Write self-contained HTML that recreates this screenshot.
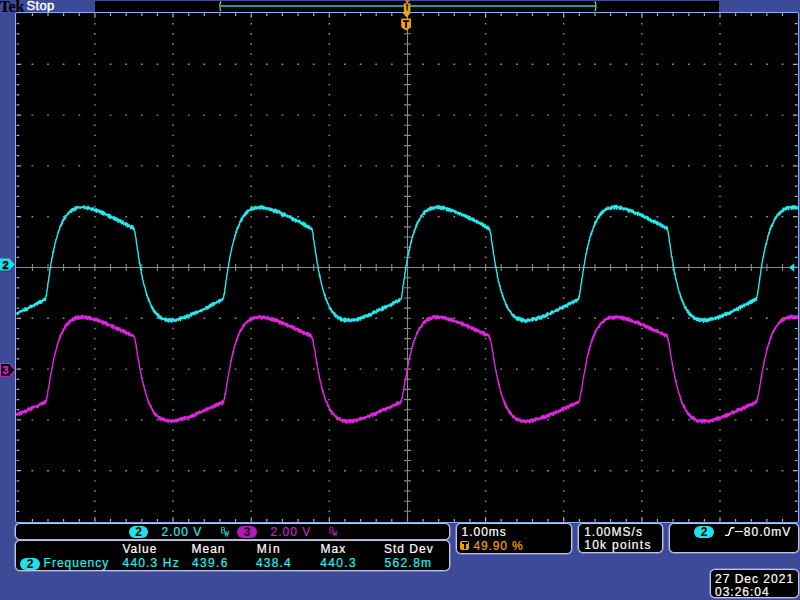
<!DOCTYPE html>
<html><head><meta charset="utf-8"><style>
*{margin:0;padding:0;box-sizing:border-box}
html,body{width:800px;height:600px;overflow:hidden;background:#3c4a98;font-family:"Liberation Sans",sans-serif}
.a{position:absolute}
#plot{left:15px;top:12px;width:784px;height:511px;background:#000;border:1.5px solid #8fb0f0;border-radius:2px}
.pnl{position:absolute;background:#000;border:1.6px solid #c4c4e0;border-radius:5px;box-shadow:0 0 0 0.6px #8e9ce8}
.t{position:absolute;font-size:12px;line-height:12px;letter-spacing:1px;white-space:pre;color:#fff;-webkit-text-stroke:0.2px currentColor}
.cy{color:#26eef2} .mg{color:#c626c8} .or{color:#f5a000}
.pill{position:absolute;height:12px;border-radius:6px;font-size:12px;line-height:12px;font-weight:bold;text-align:center;color:#000}
</style></head><body>
<div class="t" style="left:-0.5px;top:-1.3px;font-family:'Liberation Serif',serif;font-size:16px;line-height:16px;color:#000;font-weight:bold;letter-spacing:-0.1px">Tek</div>
<div class="t" style="left:26.6px;top:-0.6px;font-size:13px;line-height:13px;letter-spacing:0.3px;-webkit-text-stroke:0.4px #fff">Stop</div>
<div class="a" style="left:95px;top:1px;width:624px;height:11px;background:#000"></div>
<div class="a" style="left:221px;top:5px;width:374px;height:2px;background:#12a09c"></div>
<div class="a" id="plot"></div>
<div class="pnl" style="left:15px;top:523px;width:435px;height:17px"></div>
<div class="pnl" style="left:15px;top:540px;width:435px;height:31px"></div>
<div class="pnl" style="left:456px;top:523px;width:116px;height:30.5px"></div>
<div class="pnl" style="left:578px;top:523px;width:85px;height:30px"></div>
<div class="pnl" style="left:669px;top:523px;width:130px;height:30px"></div>
<div class="pnl" style="left:710px;top:569px;width:89px;height:29px"></div>
<svg class="a" style="left:0;top:0" width="800" height="600" viewBox="0 0 800 600">
<path d="M94.1 23.0h1.6v1.4h-1.6zM94.1 33.1h1.6v1.4h-1.6zM94.1 43.3h1.6v1.4h-1.6zM94.1 53.4h1.6v1.4h-1.6zM94.1 63.6h1.6v1.4h-1.6zM94.1 73.8h1.6v1.4h-1.6zM94.1 83.9h1.6v1.4h-1.6zM94.1 94.1h1.6v1.4h-1.6zM94.1 104.2h1.6v1.4h-1.6zM94.1 114.4h1.6v1.4h-1.6zM94.1 124.6h1.6v1.4h-1.6zM94.1 134.7h1.6v1.4h-1.6zM94.1 144.9h1.6v1.4h-1.6zM94.1 155.0h1.6v1.4h-1.6zM94.1 165.2h1.6v1.4h-1.6zM94.1 175.4h1.6v1.4h-1.6zM94.1 185.5h1.6v1.4h-1.6zM94.1 195.7h1.6v1.4h-1.6zM94.1 205.8h1.6v1.4h-1.6zM94.1 216.0h1.6v1.4h-1.6zM94.1 226.2h1.6v1.4h-1.6zM94.1 236.3h1.6v1.4h-1.6zM94.1 246.5h1.6v1.4h-1.6zM94.1 256.6h1.6v1.4h-1.6zM94.1 266.8h1.6v1.4h-1.6zM94.1 277.0h1.6v1.4h-1.6zM94.1 287.1h1.6v1.4h-1.6zM94.1 297.3h1.6v1.4h-1.6zM94.1 307.4h1.6v1.4h-1.6zM94.1 317.6h1.6v1.4h-1.6zM94.1 327.8h1.6v1.4h-1.6zM94.1 337.9h1.6v1.4h-1.6zM94.1 348.1h1.6v1.4h-1.6zM94.1 358.2h1.6v1.4h-1.6zM94.1 368.4h1.6v1.4h-1.6zM94.1 378.6h1.6v1.4h-1.6zM94.1 388.7h1.6v1.4h-1.6zM94.1 398.9h1.6v1.4h-1.6zM94.1 409.0h1.6v1.4h-1.6zM94.1 419.2h1.6v1.4h-1.6zM94.1 429.4h1.6v1.4h-1.6zM94.1 439.5h1.6v1.4h-1.6zM94.1 449.7h1.6v1.4h-1.6zM94.1 459.8h1.6v1.4h-1.6zM94.1 470.0h1.6v1.4h-1.6zM94.1 480.2h1.6v1.4h-1.6zM94.1 490.3h1.6v1.4h-1.6zM94.1 500.5h1.6v1.4h-1.6zM94.1 510.6h1.6v1.4h-1.6zM172.2 23.0h1.6v1.4h-1.6zM172.2 33.1h1.6v1.4h-1.6zM172.2 43.3h1.6v1.4h-1.6zM172.2 53.4h1.6v1.4h-1.6zM172.2 63.6h1.6v1.4h-1.6zM172.2 73.8h1.6v1.4h-1.6zM172.2 83.9h1.6v1.4h-1.6zM172.2 94.1h1.6v1.4h-1.6zM172.2 104.2h1.6v1.4h-1.6zM172.2 114.4h1.6v1.4h-1.6zM172.2 124.6h1.6v1.4h-1.6zM172.2 134.7h1.6v1.4h-1.6zM172.2 144.9h1.6v1.4h-1.6zM172.2 155.0h1.6v1.4h-1.6zM172.2 165.2h1.6v1.4h-1.6zM172.2 175.4h1.6v1.4h-1.6zM172.2 185.5h1.6v1.4h-1.6zM172.2 195.7h1.6v1.4h-1.6zM172.2 205.8h1.6v1.4h-1.6zM172.2 216.0h1.6v1.4h-1.6zM172.2 226.2h1.6v1.4h-1.6zM172.2 236.3h1.6v1.4h-1.6zM172.2 246.5h1.6v1.4h-1.6zM172.2 256.6h1.6v1.4h-1.6zM172.2 266.8h1.6v1.4h-1.6zM172.2 277.0h1.6v1.4h-1.6zM172.2 287.1h1.6v1.4h-1.6zM172.2 297.3h1.6v1.4h-1.6zM172.2 307.4h1.6v1.4h-1.6zM172.2 317.6h1.6v1.4h-1.6zM172.2 327.8h1.6v1.4h-1.6zM172.2 337.9h1.6v1.4h-1.6zM172.2 348.1h1.6v1.4h-1.6zM172.2 358.2h1.6v1.4h-1.6zM172.2 368.4h1.6v1.4h-1.6zM172.2 378.6h1.6v1.4h-1.6zM172.2 388.7h1.6v1.4h-1.6zM172.2 398.9h1.6v1.4h-1.6zM172.2 409.0h1.6v1.4h-1.6zM172.2 419.2h1.6v1.4h-1.6zM172.2 429.4h1.6v1.4h-1.6zM172.2 439.5h1.6v1.4h-1.6zM172.2 449.7h1.6v1.4h-1.6zM172.2 459.8h1.6v1.4h-1.6zM172.2 470.0h1.6v1.4h-1.6zM172.2 480.2h1.6v1.4h-1.6zM172.2 490.3h1.6v1.4h-1.6zM172.2 500.5h1.6v1.4h-1.6zM172.2 510.6h1.6v1.4h-1.6zM250.4 23.0h1.6v1.4h-1.6zM250.4 33.1h1.6v1.4h-1.6zM250.4 43.3h1.6v1.4h-1.6zM250.4 53.4h1.6v1.4h-1.6zM250.4 63.6h1.6v1.4h-1.6zM250.4 73.8h1.6v1.4h-1.6zM250.4 83.9h1.6v1.4h-1.6zM250.4 94.1h1.6v1.4h-1.6zM250.4 104.2h1.6v1.4h-1.6zM250.4 114.4h1.6v1.4h-1.6zM250.4 124.6h1.6v1.4h-1.6zM250.4 134.7h1.6v1.4h-1.6zM250.4 144.9h1.6v1.4h-1.6zM250.4 155.0h1.6v1.4h-1.6zM250.4 165.2h1.6v1.4h-1.6zM250.4 175.4h1.6v1.4h-1.6zM250.4 185.5h1.6v1.4h-1.6zM250.4 195.7h1.6v1.4h-1.6zM250.4 205.8h1.6v1.4h-1.6zM250.4 216.0h1.6v1.4h-1.6zM250.4 226.2h1.6v1.4h-1.6zM250.4 236.3h1.6v1.4h-1.6zM250.4 246.5h1.6v1.4h-1.6zM250.4 256.6h1.6v1.4h-1.6zM250.4 266.8h1.6v1.4h-1.6zM250.4 277.0h1.6v1.4h-1.6zM250.4 287.1h1.6v1.4h-1.6zM250.4 297.3h1.6v1.4h-1.6zM250.4 307.4h1.6v1.4h-1.6zM250.4 317.6h1.6v1.4h-1.6zM250.4 327.8h1.6v1.4h-1.6zM250.4 337.9h1.6v1.4h-1.6zM250.4 348.1h1.6v1.4h-1.6zM250.4 358.2h1.6v1.4h-1.6zM250.4 368.4h1.6v1.4h-1.6zM250.4 378.6h1.6v1.4h-1.6zM250.4 388.7h1.6v1.4h-1.6zM250.4 398.9h1.6v1.4h-1.6zM250.4 409.0h1.6v1.4h-1.6zM250.4 419.2h1.6v1.4h-1.6zM250.4 429.4h1.6v1.4h-1.6zM250.4 439.5h1.6v1.4h-1.6zM250.4 449.7h1.6v1.4h-1.6zM250.4 459.8h1.6v1.4h-1.6zM250.4 470.0h1.6v1.4h-1.6zM250.4 480.2h1.6v1.4h-1.6zM250.4 490.3h1.6v1.4h-1.6zM250.4 500.5h1.6v1.4h-1.6zM250.4 510.6h1.6v1.4h-1.6zM328.5 23.0h1.6v1.4h-1.6zM328.5 33.1h1.6v1.4h-1.6zM328.5 43.3h1.6v1.4h-1.6zM328.5 53.4h1.6v1.4h-1.6zM328.5 63.6h1.6v1.4h-1.6zM328.5 73.8h1.6v1.4h-1.6zM328.5 83.9h1.6v1.4h-1.6zM328.5 94.1h1.6v1.4h-1.6zM328.5 104.2h1.6v1.4h-1.6zM328.5 114.4h1.6v1.4h-1.6zM328.5 124.6h1.6v1.4h-1.6zM328.5 134.7h1.6v1.4h-1.6zM328.5 144.9h1.6v1.4h-1.6zM328.5 155.0h1.6v1.4h-1.6zM328.5 165.2h1.6v1.4h-1.6zM328.5 175.4h1.6v1.4h-1.6zM328.5 185.5h1.6v1.4h-1.6zM328.5 195.7h1.6v1.4h-1.6zM328.5 205.8h1.6v1.4h-1.6zM328.5 216.0h1.6v1.4h-1.6zM328.5 226.2h1.6v1.4h-1.6zM328.5 236.3h1.6v1.4h-1.6zM328.5 246.5h1.6v1.4h-1.6zM328.5 256.6h1.6v1.4h-1.6zM328.5 266.8h1.6v1.4h-1.6zM328.5 277.0h1.6v1.4h-1.6zM328.5 287.1h1.6v1.4h-1.6zM328.5 297.3h1.6v1.4h-1.6zM328.5 307.4h1.6v1.4h-1.6zM328.5 317.6h1.6v1.4h-1.6zM328.5 327.8h1.6v1.4h-1.6zM328.5 337.9h1.6v1.4h-1.6zM328.5 348.1h1.6v1.4h-1.6zM328.5 358.2h1.6v1.4h-1.6zM328.5 368.4h1.6v1.4h-1.6zM328.5 378.6h1.6v1.4h-1.6zM328.5 388.7h1.6v1.4h-1.6zM328.5 398.9h1.6v1.4h-1.6zM328.5 409.0h1.6v1.4h-1.6zM328.5 419.2h1.6v1.4h-1.6zM328.5 429.4h1.6v1.4h-1.6zM328.5 439.5h1.6v1.4h-1.6zM328.5 449.7h1.6v1.4h-1.6zM328.5 459.8h1.6v1.4h-1.6zM328.5 470.0h1.6v1.4h-1.6zM328.5 480.2h1.6v1.4h-1.6zM328.5 490.3h1.6v1.4h-1.6zM328.5 500.5h1.6v1.4h-1.6zM328.5 510.6h1.6v1.4h-1.6zM484.8 23.0h1.6v1.4h-1.6zM484.8 33.1h1.6v1.4h-1.6zM484.8 43.3h1.6v1.4h-1.6zM484.8 53.4h1.6v1.4h-1.6zM484.8 63.6h1.6v1.4h-1.6zM484.8 73.8h1.6v1.4h-1.6zM484.8 83.9h1.6v1.4h-1.6zM484.8 94.1h1.6v1.4h-1.6zM484.8 104.2h1.6v1.4h-1.6zM484.8 114.4h1.6v1.4h-1.6zM484.8 124.6h1.6v1.4h-1.6zM484.8 134.7h1.6v1.4h-1.6zM484.8 144.9h1.6v1.4h-1.6zM484.8 155.0h1.6v1.4h-1.6zM484.8 165.2h1.6v1.4h-1.6zM484.8 175.4h1.6v1.4h-1.6zM484.8 185.5h1.6v1.4h-1.6zM484.8 195.7h1.6v1.4h-1.6zM484.8 205.8h1.6v1.4h-1.6zM484.8 216.0h1.6v1.4h-1.6zM484.8 226.2h1.6v1.4h-1.6zM484.8 236.3h1.6v1.4h-1.6zM484.8 246.5h1.6v1.4h-1.6zM484.8 256.6h1.6v1.4h-1.6zM484.8 266.8h1.6v1.4h-1.6zM484.8 277.0h1.6v1.4h-1.6zM484.8 287.1h1.6v1.4h-1.6zM484.8 297.3h1.6v1.4h-1.6zM484.8 307.4h1.6v1.4h-1.6zM484.8 317.6h1.6v1.4h-1.6zM484.8 327.8h1.6v1.4h-1.6zM484.8 337.9h1.6v1.4h-1.6zM484.8 348.1h1.6v1.4h-1.6zM484.8 358.2h1.6v1.4h-1.6zM484.8 368.4h1.6v1.4h-1.6zM484.8 378.6h1.6v1.4h-1.6zM484.8 388.7h1.6v1.4h-1.6zM484.8 398.9h1.6v1.4h-1.6zM484.8 409.0h1.6v1.4h-1.6zM484.8 419.2h1.6v1.4h-1.6zM484.8 429.4h1.6v1.4h-1.6zM484.8 439.5h1.6v1.4h-1.6zM484.8 449.7h1.6v1.4h-1.6zM484.8 459.8h1.6v1.4h-1.6zM484.8 470.0h1.6v1.4h-1.6zM484.8 480.2h1.6v1.4h-1.6zM484.8 490.3h1.6v1.4h-1.6zM484.8 500.5h1.6v1.4h-1.6zM484.8 510.6h1.6v1.4h-1.6zM562.9 23.0h1.6v1.4h-1.6zM562.9 33.1h1.6v1.4h-1.6zM562.9 43.3h1.6v1.4h-1.6zM562.9 53.4h1.6v1.4h-1.6zM562.9 63.6h1.6v1.4h-1.6zM562.9 73.8h1.6v1.4h-1.6zM562.9 83.9h1.6v1.4h-1.6zM562.9 94.1h1.6v1.4h-1.6zM562.9 104.2h1.6v1.4h-1.6zM562.9 114.4h1.6v1.4h-1.6zM562.9 124.6h1.6v1.4h-1.6zM562.9 134.7h1.6v1.4h-1.6zM562.9 144.9h1.6v1.4h-1.6zM562.9 155.0h1.6v1.4h-1.6zM562.9 165.2h1.6v1.4h-1.6zM562.9 175.4h1.6v1.4h-1.6zM562.9 185.5h1.6v1.4h-1.6zM562.9 195.7h1.6v1.4h-1.6zM562.9 205.8h1.6v1.4h-1.6zM562.9 216.0h1.6v1.4h-1.6zM562.9 226.2h1.6v1.4h-1.6zM562.9 236.3h1.6v1.4h-1.6zM562.9 246.5h1.6v1.4h-1.6zM562.9 256.6h1.6v1.4h-1.6zM562.9 266.8h1.6v1.4h-1.6zM562.9 277.0h1.6v1.4h-1.6zM562.9 287.1h1.6v1.4h-1.6zM562.9 297.3h1.6v1.4h-1.6zM562.9 307.4h1.6v1.4h-1.6zM562.9 317.6h1.6v1.4h-1.6zM562.9 327.8h1.6v1.4h-1.6zM562.9 337.9h1.6v1.4h-1.6zM562.9 348.1h1.6v1.4h-1.6zM562.9 358.2h1.6v1.4h-1.6zM562.9 368.4h1.6v1.4h-1.6zM562.9 378.6h1.6v1.4h-1.6zM562.9 388.7h1.6v1.4h-1.6zM562.9 398.9h1.6v1.4h-1.6zM562.9 409.0h1.6v1.4h-1.6zM562.9 419.2h1.6v1.4h-1.6zM562.9 429.4h1.6v1.4h-1.6zM562.9 439.5h1.6v1.4h-1.6zM562.9 449.7h1.6v1.4h-1.6zM562.9 459.8h1.6v1.4h-1.6zM562.9 470.0h1.6v1.4h-1.6zM562.9 480.2h1.6v1.4h-1.6zM562.9 490.3h1.6v1.4h-1.6zM562.9 500.5h1.6v1.4h-1.6zM562.9 510.6h1.6v1.4h-1.6zM641.1 23.0h1.6v1.4h-1.6zM641.1 33.1h1.6v1.4h-1.6zM641.1 43.3h1.6v1.4h-1.6zM641.1 53.4h1.6v1.4h-1.6zM641.1 63.6h1.6v1.4h-1.6zM641.1 73.8h1.6v1.4h-1.6zM641.1 83.9h1.6v1.4h-1.6zM641.1 94.1h1.6v1.4h-1.6zM641.1 104.2h1.6v1.4h-1.6zM641.1 114.4h1.6v1.4h-1.6zM641.1 124.6h1.6v1.4h-1.6zM641.1 134.7h1.6v1.4h-1.6zM641.1 144.9h1.6v1.4h-1.6zM641.1 155.0h1.6v1.4h-1.6zM641.1 165.2h1.6v1.4h-1.6zM641.1 175.4h1.6v1.4h-1.6zM641.1 185.5h1.6v1.4h-1.6zM641.1 195.7h1.6v1.4h-1.6zM641.1 205.8h1.6v1.4h-1.6zM641.1 216.0h1.6v1.4h-1.6zM641.1 226.2h1.6v1.4h-1.6zM641.1 236.3h1.6v1.4h-1.6zM641.1 246.5h1.6v1.4h-1.6zM641.1 256.6h1.6v1.4h-1.6zM641.1 266.8h1.6v1.4h-1.6zM641.1 277.0h1.6v1.4h-1.6zM641.1 287.1h1.6v1.4h-1.6zM641.1 297.3h1.6v1.4h-1.6zM641.1 307.4h1.6v1.4h-1.6zM641.1 317.6h1.6v1.4h-1.6zM641.1 327.8h1.6v1.4h-1.6zM641.1 337.9h1.6v1.4h-1.6zM641.1 348.1h1.6v1.4h-1.6zM641.1 358.2h1.6v1.4h-1.6zM641.1 368.4h1.6v1.4h-1.6zM641.1 378.6h1.6v1.4h-1.6zM641.1 388.7h1.6v1.4h-1.6zM641.1 398.9h1.6v1.4h-1.6zM641.1 409.0h1.6v1.4h-1.6zM641.1 419.2h1.6v1.4h-1.6zM641.1 429.4h1.6v1.4h-1.6zM641.1 439.5h1.6v1.4h-1.6zM641.1 449.7h1.6v1.4h-1.6zM641.1 459.8h1.6v1.4h-1.6zM641.1 470.0h1.6v1.4h-1.6zM641.1 480.2h1.6v1.4h-1.6zM641.1 490.3h1.6v1.4h-1.6zM641.1 500.5h1.6v1.4h-1.6zM641.1 510.6h1.6v1.4h-1.6zM719.2 23.0h1.6v1.4h-1.6zM719.2 33.1h1.6v1.4h-1.6zM719.2 43.3h1.6v1.4h-1.6zM719.2 53.4h1.6v1.4h-1.6zM719.2 63.6h1.6v1.4h-1.6zM719.2 73.8h1.6v1.4h-1.6zM719.2 83.9h1.6v1.4h-1.6zM719.2 94.1h1.6v1.4h-1.6zM719.2 104.2h1.6v1.4h-1.6zM719.2 114.4h1.6v1.4h-1.6zM719.2 124.6h1.6v1.4h-1.6zM719.2 134.7h1.6v1.4h-1.6zM719.2 144.9h1.6v1.4h-1.6zM719.2 155.0h1.6v1.4h-1.6zM719.2 165.2h1.6v1.4h-1.6zM719.2 175.4h1.6v1.4h-1.6zM719.2 185.5h1.6v1.4h-1.6zM719.2 195.7h1.6v1.4h-1.6zM719.2 205.8h1.6v1.4h-1.6zM719.2 216.0h1.6v1.4h-1.6zM719.2 226.2h1.6v1.4h-1.6zM719.2 236.3h1.6v1.4h-1.6zM719.2 246.5h1.6v1.4h-1.6zM719.2 256.6h1.6v1.4h-1.6zM719.2 266.8h1.6v1.4h-1.6zM719.2 277.0h1.6v1.4h-1.6zM719.2 287.1h1.6v1.4h-1.6zM719.2 297.3h1.6v1.4h-1.6zM719.2 307.4h1.6v1.4h-1.6zM719.2 317.6h1.6v1.4h-1.6zM719.2 327.8h1.6v1.4h-1.6zM719.2 337.9h1.6v1.4h-1.6zM719.2 348.1h1.6v1.4h-1.6zM719.2 358.2h1.6v1.4h-1.6zM719.2 368.4h1.6v1.4h-1.6zM719.2 378.6h1.6v1.4h-1.6zM719.2 388.7h1.6v1.4h-1.6zM719.2 398.9h1.6v1.4h-1.6zM719.2 409.0h1.6v1.4h-1.6zM719.2 419.2h1.6v1.4h-1.6zM719.2 429.4h1.6v1.4h-1.6zM719.2 439.5h1.6v1.4h-1.6zM719.2 449.7h1.6v1.4h-1.6zM719.2 459.8h1.6v1.4h-1.6zM719.2 470.0h1.6v1.4h-1.6zM719.2 480.2h1.6v1.4h-1.6zM719.2 490.3h1.6v1.4h-1.6zM719.2 500.5h1.6v1.4h-1.6zM719.2 510.6h1.6v1.4h-1.6zM31.5 63.6h1.8v1.4h-1.8zM47.1 63.6h1.8v1.4h-1.8zM62.7 63.6h1.8v1.4h-1.8zM78.4 63.6h1.8v1.4h-1.8zM109.6 63.6h1.8v1.4h-1.8zM125.3 63.6h1.8v1.4h-1.8zM140.9 63.6h1.8v1.4h-1.8zM156.5 63.6h1.8v1.4h-1.8zM187.8 63.6h1.8v1.4h-1.8zM203.4 63.6h1.8v1.4h-1.8zM219.0 63.6h1.8v1.4h-1.8zM234.7 63.6h1.8v1.4h-1.8zM265.9 63.6h1.8v1.4h-1.8zM281.5 63.6h1.8v1.4h-1.8zM297.2 63.6h1.8v1.4h-1.8zM312.8 63.6h1.8v1.4h-1.8zM344.0 63.6h1.8v1.4h-1.8zM359.7 63.6h1.8v1.4h-1.8zM375.3 63.6h1.8v1.4h-1.8zM390.9 63.6h1.8v1.4h-1.8zM422.2 63.6h1.8v1.4h-1.8zM437.8 63.6h1.8v1.4h-1.8zM453.4 63.6h1.8v1.4h-1.8zM469.1 63.6h1.8v1.4h-1.8zM500.3 63.6h1.8v1.4h-1.8zM516.0 63.6h1.8v1.4h-1.8zM531.6 63.6h1.8v1.4h-1.8zM547.2 63.6h1.8v1.4h-1.8zM578.5 63.6h1.8v1.4h-1.8zM594.1 63.6h1.8v1.4h-1.8zM609.7 63.6h1.8v1.4h-1.8zM625.4 63.6h1.8v1.4h-1.8zM656.6 63.6h1.8v1.4h-1.8zM672.2 63.6h1.8v1.4h-1.8zM687.9 63.6h1.8v1.4h-1.8zM703.5 63.6h1.8v1.4h-1.8zM734.7 63.6h1.8v1.4h-1.8zM750.4 63.6h1.8v1.4h-1.8zM766.0 63.6h1.8v1.4h-1.8zM781.6 63.6h1.8v1.4h-1.8zM31.5 114.4h1.8v1.4h-1.8zM47.1 114.4h1.8v1.4h-1.8zM62.7 114.4h1.8v1.4h-1.8zM78.4 114.4h1.8v1.4h-1.8zM109.6 114.4h1.8v1.4h-1.8zM125.3 114.4h1.8v1.4h-1.8zM140.9 114.4h1.8v1.4h-1.8zM156.5 114.4h1.8v1.4h-1.8zM187.8 114.4h1.8v1.4h-1.8zM203.4 114.4h1.8v1.4h-1.8zM219.0 114.4h1.8v1.4h-1.8zM234.7 114.4h1.8v1.4h-1.8zM265.9 114.4h1.8v1.4h-1.8zM281.5 114.4h1.8v1.4h-1.8zM297.2 114.4h1.8v1.4h-1.8zM312.8 114.4h1.8v1.4h-1.8zM344.0 114.4h1.8v1.4h-1.8zM359.7 114.4h1.8v1.4h-1.8zM375.3 114.4h1.8v1.4h-1.8zM390.9 114.4h1.8v1.4h-1.8zM422.2 114.4h1.8v1.4h-1.8zM437.8 114.4h1.8v1.4h-1.8zM453.4 114.4h1.8v1.4h-1.8zM469.1 114.4h1.8v1.4h-1.8zM500.3 114.4h1.8v1.4h-1.8zM516.0 114.4h1.8v1.4h-1.8zM531.6 114.4h1.8v1.4h-1.8zM547.2 114.4h1.8v1.4h-1.8zM578.5 114.4h1.8v1.4h-1.8zM594.1 114.4h1.8v1.4h-1.8zM609.7 114.4h1.8v1.4h-1.8zM625.4 114.4h1.8v1.4h-1.8zM656.6 114.4h1.8v1.4h-1.8zM672.2 114.4h1.8v1.4h-1.8zM687.9 114.4h1.8v1.4h-1.8zM703.5 114.4h1.8v1.4h-1.8zM734.7 114.4h1.8v1.4h-1.8zM750.4 114.4h1.8v1.4h-1.8zM766.0 114.4h1.8v1.4h-1.8zM781.6 114.4h1.8v1.4h-1.8zM31.5 165.2h1.8v1.4h-1.8zM47.1 165.2h1.8v1.4h-1.8zM62.7 165.2h1.8v1.4h-1.8zM78.4 165.2h1.8v1.4h-1.8zM109.6 165.2h1.8v1.4h-1.8zM125.3 165.2h1.8v1.4h-1.8zM140.9 165.2h1.8v1.4h-1.8zM156.5 165.2h1.8v1.4h-1.8zM187.8 165.2h1.8v1.4h-1.8zM203.4 165.2h1.8v1.4h-1.8zM219.0 165.2h1.8v1.4h-1.8zM234.7 165.2h1.8v1.4h-1.8zM265.9 165.2h1.8v1.4h-1.8zM281.5 165.2h1.8v1.4h-1.8zM297.2 165.2h1.8v1.4h-1.8zM312.8 165.2h1.8v1.4h-1.8zM344.0 165.2h1.8v1.4h-1.8zM359.7 165.2h1.8v1.4h-1.8zM375.3 165.2h1.8v1.4h-1.8zM390.9 165.2h1.8v1.4h-1.8zM422.2 165.2h1.8v1.4h-1.8zM437.8 165.2h1.8v1.4h-1.8zM453.4 165.2h1.8v1.4h-1.8zM469.1 165.2h1.8v1.4h-1.8zM500.3 165.2h1.8v1.4h-1.8zM516.0 165.2h1.8v1.4h-1.8zM531.6 165.2h1.8v1.4h-1.8zM547.2 165.2h1.8v1.4h-1.8zM578.5 165.2h1.8v1.4h-1.8zM594.1 165.2h1.8v1.4h-1.8zM609.7 165.2h1.8v1.4h-1.8zM625.4 165.2h1.8v1.4h-1.8zM656.6 165.2h1.8v1.4h-1.8zM672.2 165.2h1.8v1.4h-1.8zM687.9 165.2h1.8v1.4h-1.8zM703.5 165.2h1.8v1.4h-1.8zM734.7 165.2h1.8v1.4h-1.8zM750.4 165.2h1.8v1.4h-1.8zM766.0 165.2h1.8v1.4h-1.8zM781.6 165.2h1.8v1.4h-1.8zM31.5 216.0h1.8v1.4h-1.8zM47.1 216.0h1.8v1.4h-1.8zM62.7 216.0h1.8v1.4h-1.8zM78.4 216.0h1.8v1.4h-1.8zM109.6 216.0h1.8v1.4h-1.8zM125.3 216.0h1.8v1.4h-1.8zM140.9 216.0h1.8v1.4h-1.8zM156.5 216.0h1.8v1.4h-1.8zM187.8 216.0h1.8v1.4h-1.8zM203.4 216.0h1.8v1.4h-1.8zM219.0 216.0h1.8v1.4h-1.8zM234.7 216.0h1.8v1.4h-1.8zM265.9 216.0h1.8v1.4h-1.8zM281.5 216.0h1.8v1.4h-1.8zM297.2 216.0h1.8v1.4h-1.8zM312.8 216.0h1.8v1.4h-1.8zM344.0 216.0h1.8v1.4h-1.8zM359.7 216.0h1.8v1.4h-1.8zM375.3 216.0h1.8v1.4h-1.8zM390.9 216.0h1.8v1.4h-1.8zM422.2 216.0h1.8v1.4h-1.8zM437.8 216.0h1.8v1.4h-1.8zM453.4 216.0h1.8v1.4h-1.8zM469.1 216.0h1.8v1.4h-1.8zM500.3 216.0h1.8v1.4h-1.8zM516.0 216.0h1.8v1.4h-1.8zM531.6 216.0h1.8v1.4h-1.8zM547.2 216.0h1.8v1.4h-1.8zM578.5 216.0h1.8v1.4h-1.8zM594.1 216.0h1.8v1.4h-1.8zM609.7 216.0h1.8v1.4h-1.8zM625.4 216.0h1.8v1.4h-1.8zM656.6 216.0h1.8v1.4h-1.8zM672.2 216.0h1.8v1.4h-1.8zM687.9 216.0h1.8v1.4h-1.8zM703.5 216.0h1.8v1.4h-1.8zM734.7 216.0h1.8v1.4h-1.8zM750.4 216.0h1.8v1.4h-1.8zM766.0 216.0h1.8v1.4h-1.8zM781.6 216.0h1.8v1.4h-1.8zM31.5 317.6h1.8v1.4h-1.8zM47.1 317.6h1.8v1.4h-1.8zM62.7 317.6h1.8v1.4h-1.8zM78.4 317.6h1.8v1.4h-1.8zM109.6 317.6h1.8v1.4h-1.8zM125.3 317.6h1.8v1.4h-1.8zM140.9 317.6h1.8v1.4h-1.8zM156.5 317.6h1.8v1.4h-1.8zM187.8 317.6h1.8v1.4h-1.8zM203.4 317.6h1.8v1.4h-1.8zM219.0 317.6h1.8v1.4h-1.8zM234.7 317.6h1.8v1.4h-1.8zM265.9 317.6h1.8v1.4h-1.8zM281.5 317.6h1.8v1.4h-1.8zM297.2 317.6h1.8v1.4h-1.8zM312.8 317.6h1.8v1.4h-1.8zM344.0 317.6h1.8v1.4h-1.8zM359.7 317.6h1.8v1.4h-1.8zM375.3 317.6h1.8v1.4h-1.8zM390.9 317.6h1.8v1.4h-1.8zM422.2 317.6h1.8v1.4h-1.8zM437.8 317.6h1.8v1.4h-1.8zM453.4 317.6h1.8v1.4h-1.8zM469.1 317.6h1.8v1.4h-1.8zM500.3 317.6h1.8v1.4h-1.8zM516.0 317.6h1.8v1.4h-1.8zM531.6 317.6h1.8v1.4h-1.8zM547.2 317.6h1.8v1.4h-1.8zM578.5 317.6h1.8v1.4h-1.8zM594.1 317.6h1.8v1.4h-1.8zM609.7 317.6h1.8v1.4h-1.8zM625.4 317.6h1.8v1.4h-1.8zM656.6 317.6h1.8v1.4h-1.8zM672.2 317.6h1.8v1.4h-1.8zM687.9 317.6h1.8v1.4h-1.8zM703.5 317.6h1.8v1.4h-1.8zM734.7 317.6h1.8v1.4h-1.8zM750.4 317.6h1.8v1.4h-1.8zM766.0 317.6h1.8v1.4h-1.8zM781.6 317.6h1.8v1.4h-1.8zM31.5 368.4h1.8v1.4h-1.8zM47.1 368.4h1.8v1.4h-1.8zM62.7 368.4h1.8v1.4h-1.8zM78.4 368.4h1.8v1.4h-1.8zM109.6 368.4h1.8v1.4h-1.8zM125.3 368.4h1.8v1.4h-1.8zM140.9 368.4h1.8v1.4h-1.8zM156.5 368.4h1.8v1.4h-1.8zM187.8 368.4h1.8v1.4h-1.8zM203.4 368.4h1.8v1.4h-1.8zM219.0 368.4h1.8v1.4h-1.8zM234.7 368.4h1.8v1.4h-1.8zM265.9 368.4h1.8v1.4h-1.8zM281.5 368.4h1.8v1.4h-1.8zM297.2 368.4h1.8v1.4h-1.8zM312.8 368.4h1.8v1.4h-1.8zM344.0 368.4h1.8v1.4h-1.8zM359.7 368.4h1.8v1.4h-1.8zM375.3 368.4h1.8v1.4h-1.8zM390.9 368.4h1.8v1.4h-1.8zM422.2 368.4h1.8v1.4h-1.8zM437.8 368.4h1.8v1.4h-1.8zM453.4 368.4h1.8v1.4h-1.8zM469.1 368.4h1.8v1.4h-1.8zM500.3 368.4h1.8v1.4h-1.8zM516.0 368.4h1.8v1.4h-1.8zM531.6 368.4h1.8v1.4h-1.8zM547.2 368.4h1.8v1.4h-1.8zM578.5 368.4h1.8v1.4h-1.8zM594.1 368.4h1.8v1.4h-1.8zM609.7 368.4h1.8v1.4h-1.8zM625.4 368.4h1.8v1.4h-1.8zM656.6 368.4h1.8v1.4h-1.8zM672.2 368.4h1.8v1.4h-1.8zM687.9 368.4h1.8v1.4h-1.8zM703.5 368.4h1.8v1.4h-1.8zM734.7 368.4h1.8v1.4h-1.8zM750.4 368.4h1.8v1.4h-1.8zM766.0 368.4h1.8v1.4h-1.8zM781.6 368.4h1.8v1.4h-1.8zM31.5 419.2h1.8v1.4h-1.8zM47.1 419.2h1.8v1.4h-1.8zM62.7 419.2h1.8v1.4h-1.8zM78.4 419.2h1.8v1.4h-1.8zM109.6 419.2h1.8v1.4h-1.8zM125.3 419.2h1.8v1.4h-1.8zM140.9 419.2h1.8v1.4h-1.8zM156.5 419.2h1.8v1.4h-1.8zM187.8 419.2h1.8v1.4h-1.8zM203.4 419.2h1.8v1.4h-1.8zM219.0 419.2h1.8v1.4h-1.8zM234.7 419.2h1.8v1.4h-1.8zM265.9 419.2h1.8v1.4h-1.8zM281.5 419.2h1.8v1.4h-1.8zM297.2 419.2h1.8v1.4h-1.8zM312.8 419.2h1.8v1.4h-1.8zM344.0 419.2h1.8v1.4h-1.8zM359.7 419.2h1.8v1.4h-1.8zM375.3 419.2h1.8v1.4h-1.8zM390.9 419.2h1.8v1.4h-1.8zM422.2 419.2h1.8v1.4h-1.8zM437.8 419.2h1.8v1.4h-1.8zM453.4 419.2h1.8v1.4h-1.8zM469.1 419.2h1.8v1.4h-1.8zM500.3 419.2h1.8v1.4h-1.8zM516.0 419.2h1.8v1.4h-1.8zM531.6 419.2h1.8v1.4h-1.8zM547.2 419.2h1.8v1.4h-1.8zM578.5 419.2h1.8v1.4h-1.8zM594.1 419.2h1.8v1.4h-1.8zM609.7 419.2h1.8v1.4h-1.8zM625.4 419.2h1.8v1.4h-1.8zM656.6 419.2h1.8v1.4h-1.8zM672.2 419.2h1.8v1.4h-1.8zM687.9 419.2h1.8v1.4h-1.8zM703.5 419.2h1.8v1.4h-1.8zM734.7 419.2h1.8v1.4h-1.8zM750.4 419.2h1.8v1.4h-1.8zM766.0 419.2h1.8v1.4h-1.8zM781.6 419.2h1.8v1.4h-1.8zM31.5 470.0h1.8v1.4h-1.8zM47.1 470.0h1.8v1.4h-1.8zM62.7 470.0h1.8v1.4h-1.8zM78.4 470.0h1.8v1.4h-1.8zM109.6 470.0h1.8v1.4h-1.8zM125.3 470.0h1.8v1.4h-1.8zM140.9 470.0h1.8v1.4h-1.8zM156.5 470.0h1.8v1.4h-1.8zM187.8 470.0h1.8v1.4h-1.8zM203.4 470.0h1.8v1.4h-1.8zM219.0 470.0h1.8v1.4h-1.8zM234.7 470.0h1.8v1.4h-1.8zM265.9 470.0h1.8v1.4h-1.8zM281.5 470.0h1.8v1.4h-1.8zM297.2 470.0h1.8v1.4h-1.8zM312.8 470.0h1.8v1.4h-1.8zM344.0 470.0h1.8v1.4h-1.8zM359.7 470.0h1.8v1.4h-1.8zM375.3 470.0h1.8v1.4h-1.8zM390.9 470.0h1.8v1.4h-1.8zM422.2 470.0h1.8v1.4h-1.8zM437.8 470.0h1.8v1.4h-1.8zM453.4 470.0h1.8v1.4h-1.8zM469.1 470.0h1.8v1.4h-1.8zM500.3 470.0h1.8v1.4h-1.8zM516.0 470.0h1.8v1.4h-1.8zM531.6 470.0h1.8v1.4h-1.8zM547.2 470.0h1.8v1.4h-1.8zM578.5 470.0h1.8v1.4h-1.8zM594.1 470.0h1.8v1.4h-1.8zM609.7 470.0h1.8v1.4h-1.8zM625.4 470.0h1.8v1.4h-1.8zM656.6 470.0h1.8v1.4h-1.8zM672.2 470.0h1.8v1.4h-1.8zM687.9 470.0h1.8v1.4h-1.8zM703.5 470.0h1.8v1.4h-1.8zM734.7 470.0h1.8v1.4h-1.8zM750.4 470.0h1.8v1.4h-1.8zM766.0 470.0h1.8v1.4h-1.8zM781.6 470.0h1.8v1.4h-1.8z" fill="#8e8e8e"/>
<path d="M31.8 13.3h1.2v2.7h-1.2zM31.8 519.0h1.2v2.7h-1.2zM47.4 13.3h1.2v2.7h-1.2zM47.4 519.0h1.2v2.7h-1.2zM63.0 13.3h1.2v2.7h-1.2zM63.0 519.0h1.2v2.7h-1.2zM78.7 13.3h1.2v2.7h-1.2zM78.7 519.0h1.2v2.7h-1.2zM94.3 13.3h1.2v4.5h-1.2zM94.3 517.2h1.2v4.5h-1.2zM109.9 13.3h1.2v2.7h-1.2zM109.9 519.0h1.2v2.7h-1.2zM125.6 13.3h1.2v2.7h-1.2zM125.6 519.0h1.2v2.7h-1.2zM141.2 13.3h1.2v2.7h-1.2zM141.2 519.0h1.2v2.7h-1.2zM156.8 13.3h1.2v2.7h-1.2zM156.8 519.0h1.2v2.7h-1.2zM172.4 13.3h1.2v4.5h-1.2zM172.4 517.2h1.2v4.5h-1.2zM188.1 13.3h1.2v2.7h-1.2zM188.1 519.0h1.2v2.7h-1.2zM203.7 13.3h1.2v2.7h-1.2zM203.7 519.0h1.2v2.7h-1.2zM219.3 13.3h1.2v2.7h-1.2zM219.3 519.0h1.2v2.7h-1.2zM235.0 13.3h1.2v2.7h-1.2zM235.0 519.0h1.2v2.7h-1.2zM250.6 13.3h1.2v4.5h-1.2zM250.6 517.2h1.2v4.5h-1.2zM266.2 13.3h1.2v2.7h-1.2zM266.2 519.0h1.2v2.7h-1.2zM281.8 13.3h1.2v2.7h-1.2zM281.8 519.0h1.2v2.7h-1.2zM297.5 13.3h1.2v2.7h-1.2zM297.5 519.0h1.2v2.7h-1.2zM313.1 13.3h1.2v2.7h-1.2zM313.1 519.0h1.2v2.7h-1.2zM328.7 13.3h1.2v4.5h-1.2zM328.7 517.2h1.2v4.5h-1.2zM344.3 13.3h1.2v2.7h-1.2zM344.3 519.0h1.2v2.7h-1.2zM360.0 13.3h1.2v2.7h-1.2zM360.0 519.0h1.2v2.7h-1.2zM375.6 13.3h1.2v2.7h-1.2zM375.6 519.0h1.2v2.7h-1.2zM391.2 13.3h1.2v2.7h-1.2zM391.2 519.0h1.2v2.7h-1.2zM406.9 13.3h1.2v4.5h-1.2zM406.9 517.2h1.2v4.5h-1.2zM422.5 13.3h1.2v2.7h-1.2zM422.5 519.0h1.2v2.7h-1.2zM438.1 13.3h1.2v2.7h-1.2zM438.1 519.0h1.2v2.7h-1.2zM453.7 13.3h1.2v2.7h-1.2zM453.7 519.0h1.2v2.7h-1.2zM469.4 13.3h1.2v2.7h-1.2zM469.4 519.0h1.2v2.7h-1.2zM485.0 13.3h1.2v4.5h-1.2zM485.0 517.2h1.2v4.5h-1.2zM500.6 13.3h1.2v2.7h-1.2zM500.6 519.0h1.2v2.7h-1.2zM516.3 13.3h1.2v2.7h-1.2zM516.3 519.0h1.2v2.7h-1.2zM531.9 13.3h1.2v2.7h-1.2zM531.9 519.0h1.2v2.7h-1.2zM547.5 13.3h1.2v2.7h-1.2zM547.5 519.0h1.2v2.7h-1.2zM563.1 13.3h1.2v4.5h-1.2zM563.1 517.2h1.2v4.5h-1.2zM578.8 13.3h1.2v2.7h-1.2zM578.8 519.0h1.2v2.7h-1.2zM594.4 13.3h1.2v2.7h-1.2zM594.4 519.0h1.2v2.7h-1.2zM610.0 13.3h1.2v2.7h-1.2zM610.0 519.0h1.2v2.7h-1.2zM625.7 13.3h1.2v2.7h-1.2zM625.7 519.0h1.2v2.7h-1.2zM641.3 13.3h1.2v4.5h-1.2zM641.3 517.2h1.2v4.5h-1.2zM656.9 13.3h1.2v2.7h-1.2zM656.9 519.0h1.2v2.7h-1.2zM672.5 13.3h1.2v2.7h-1.2zM672.5 519.0h1.2v2.7h-1.2zM688.2 13.3h1.2v2.7h-1.2zM688.2 519.0h1.2v2.7h-1.2zM703.8 13.3h1.2v2.7h-1.2zM703.8 519.0h1.2v2.7h-1.2zM719.4 13.3h1.2v4.5h-1.2zM719.4 517.2h1.2v4.5h-1.2zM735.0 13.3h1.2v2.7h-1.2zM735.0 519.0h1.2v2.7h-1.2zM750.7 13.3h1.2v2.7h-1.2zM750.7 519.0h1.2v2.7h-1.2zM766.3 13.3h1.2v2.7h-1.2zM766.3 519.0h1.2v2.7h-1.2zM781.9 13.3h1.2v2.7h-1.2zM781.9 519.0h1.2v2.7h-1.2zM16.6 23.1h2.6v1.2h-2.6zM794.9 23.1h2.6v1.2h-2.6zM16.6 33.2h2.6v1.2h-2.6zM794.9 33.2h2.6v1.2h-2.6zM16.6 43.4h2.6v1.2h-2.6zM794.9 43.4h2.6v1.2h-2.6zM16.6 53.5h2.6v1.2h-2.6zM794.9 53.5h2.6v1.2h-2.6zM16.6 63.7h4.5v1.2h-4.5zM793.0 63.7h4.5v1.2h-4.5zM16.6 73.9h2.6v1.2h-2.6zM794.9 73.9h2.6v1.2h-2.6zM16.6 84.0h2.6v1.2h-2.6zM794.9 84.0h2.6v1.2h-2.6zM16.6 94.2h2.6v1.2h-2.6zM794.9 94.2h2.6v1.2h-2.6zM16.6 104.3h2.6v1.2h-2.6zM794.9 104.3h2.6v1.2h-2.6zM16.6 114.5h4.5v1.2h-4.5zM793.0 114.5h4.5v1.2h-4.5zM16.6 124.7h2.6v1.2h-2.6zM794.9 124.7h2.6v1.2h-2.6zM16.6 134.8h2.6v1.2h-2.6zM794.9 134.8h2.6v1.2h-2.6zM16.6 145.0h2.6v1.2h-2.6zM794.9 145.0h2.6v1.2h-2.6zM16.6 155.1h2.6v1.2h-2.6zM794.9 155.1h2.6v1.2h-2.6zM16.6 165.3h4.5v1.2h-4.5zM793.0 165.3h4.5v1.2h-4.5zM16.6 175.5h2.6v1.2h-2.6zM794.9 175.5h2.6v1.2h-2.6zM16.6 185.6h2.6v1.2h-2.6zM794.9 185.6h2.6v1.2h-2.6zM16.6 195.8h2.6v1.2h-2.6zM794.9 195.8h2.6v1.2h-2.6zM16.6 205.9h2.6v1.2h-2.6zM794.9 205.9h2.6v1.2h-2.6zM16.6 216.1h4.5v1.2h-4.5zM793.0 216.1h4.5v1.2h-4.5zM16.6 226.3h2.6v1.2h-2.6zM794.9 226.3h2.6v1.2h-2.6zM16.6 236.4h2.6v1.2h-2.6zM794.9 236.4h2.6v1.2h-2.6zM16.6 246.6h2.6v1.2h-2.6zM794.9 246.6h2.6v1.2h-2.6zM16.6 256.7h2.6v1.2h-2.6zM794.9 256.7h2.6v1.2h-2.6zM16.6 266.9h4.5v1.2h-4.5zM793.0 266.9h4.5v1.2h-4.5zM16.6 277.1h2.6v1.2h-2.6zM794.9 277.1h2.6v1.2h-2.6zM16.6 287.2h2.6v1.2h-2.6zM794.9 287.2h2.6v1.2h-2.6zM16.6 297.4h2.6v1.2h-2.6zM794.9 297.4h2.6v1.2h-2.6zM16.6 307.5h2.6v1.2h-2.6zM794.9 307.5h2.6v1.2h-2.6zM16.6 317.7h4.5v1.2h-4.5zM793.0 317.7h4.5v1.2h-4.5zM16.6 327.9h2.6v1.2h-2.6zM794.9 327.9h2.6v1.2h-2.6zM16.6 338.0h2.6v1.2h-2.6zM794.9 338.0h2.6v1.2h-2.6zM16.6 348.2h2.6v1.2h-2.6zM794.9 348.2h2.6v1.2h-2.6zM16.6 358.3h2.6v1.2h-2.6zM794.9 358.3h2.6v1.2h-2.6zM16.6 368.5h4.5v1.2h-4.5zM793.0 368.5h4.5v1.2h-4.5zM16.6 378.7h2.6v1.2h-2.6zM794.9 378.7h2.6v1.2h-2.6zM16.6 388.8h2.6v1.2h-2.6zM794.9 388.8h2.6v1.2h-2.6zM16.6 399.0h2.6v1.2h-2.6zM794.9 399.0h2.6v1.2h-2.6zM16.6 409.1h2.6v1.2h-2.6zM794.9 409.1h2.6v1.2h-2.6zM16.6 419.3h4.5v1.2h-4.5zM793.0 419.3h4.5v1.2h-4.5zM16.6 429.5h2.6v1.2h-2.6zM794.9 429.5h2.6v1.2h-2.6zM16.6 439.6h2.6v1.2h-2.6zM794.9 439.6h2.6v1.2h-2.6zM16.6 449.8h2.6v1.2h-2.6zM794.9 449.8h2.6v1.2h-2.6zM16.6 459.9h2.6v1.2h-2.6zM794.9 459.9h2.6v1.2h-2.6zM16.6 470.1h4.5v1.2h-4.5zM793.0 470.1h4.5v1.2h-4.5zM16.6 480.3h2.6v1.2h-2.6zM794.9 480.3h2.6v1.2h-2.6zM16.6 490.4h2.6v1.2h-2.6zM794.9 490.4h2.6v1.2h-2.6zM16.6 500.6h2.6v1.2h-2.6zM794.9 500.6h2.6v1.2h-2.6zM16.6 510.7h2.6v1.2h-2.6zM794.9 510.7h2.6v1.2h-2.6z" fill="#b4b4b4"/>
<path d="M16.0 267.5H797.0M407.5 13.0V522.0" stroke="#8a8a8a" stroke-width="1.1" fill="none"/>
<path d="M32.4 264.0V271.0M404.0 23.7H411.0M48.0 264.0V271.0M404.0 33.8H411.0M63.6 264.0V271.0M404.0 44.0H411.0M79.3 264.0V271.0M404.0 54.1H411.0M94.9 264.0V271.0M404.0 64.3H411.0M110.5 264.0V271.0M404.0 74.5H411.0M126.2 264.0V271.0M404.0 84.6H411.0M141.8 264.0V271.0M404.0 94.8H411.0M157.4 264.0V271.0M404.0 104.9H411.0M173.0 264.0V271.0M404.0 115.1H411.0M188.7 264.0V271.0M404.0 125.3H411.0M204.3 264.0V271.0M404.0 135.4H411.0M219.9 264.0V271.0M404.0 145.6H411.0M235.6 264.0V271.0M404.0 155.7H411.0M251.2 264.0V271.0M404.0 165.9H411.0M266.8 264.0V271.0M404.0 176.1H411.0M282.4 264.0V271.0M404.0 186.2H411.0M298.1 264.0V271.0M404.0 196.4H411.0M313.7 264.0V271.0M404.0 206.5H411.0M329.3 264.0V271.0M404.0 216.7H411.0M344.9 264.0V271.0M404.0 226.9H411.0M360.6 264.0V271.0M404.0 237.0H411.0M376.2 264.0V271.0M404.0 247.2H411.0M391.8 264.0V271.0M404.0 257.3H411.0M407.5 264.0V271.0M404.0 267.5H411.0M423.1 264.0V271.0M404.0 277.7H411.0M438.7 264.0V271.0M404.0 287.8H411.0M454.3 264.0V271.0M404.0 298.0H411.0M470.0 264.0V271.0M404.0 308.1H411.0M485.6 264.0V271.0M404.0 318.3H411.0M501.2 264.0V271.0M404.0 328.5H411.0M516.9 264.0V271.0M404.0 338.6H411.0M532.5 264.0V271.0M404.0 348.8H411.0M548.1 264.0V271.0M404.0 358.9H411.0M563.7 264.0V271.0M404.0 369.1H411.0M579.4 264.0V271.0M404.0 379.3H411.0M595.0 264.0V271.0M404.0 389.4H411.0M610.6 264.0V271.0M404.0 399.6H411.0M626.3 264.0V271.0M404.0 409.7H411.0M641.9 264.0V271.0M404.0 419.9H411.0M657.5 264.0V271.0M404.0 430.1H411.0M673.1 264.0V271.0M404.0 440.2H411.0M688.8 264.0V271.0M404.0 450.4H411.0M704.4 264.0V271.0M404.0 460.5H411.0M720.0 264.0V271.0M404.0 470.7H411.0M735.6 264.0V271.0M404.0 480.9H411.0M751.3 264.0V271.0M404.0 491.0H411.0M766.9 264.0V271.0M404.0 501.2H411.0M782.5 264.0V271.0M404.0 511.3H411.0" stroke="#8a8a8a" stroke-width="1.1" fill="none"/>
<polyline points="16.50,314.32 17.00,312.84 17.50,314.45 18.00,312.52 18.50,313.79 19.00,311.54 19.50,312.47 20.00,310.82 20.50,311.96 21.00,310.48 21.50,311.55 22.00,310.62 22.50,311.71 23.00,308.82 23.50,310.69 24.00,309.42 24.50,311.11 25.00,307.64 25.50,310.54 26.00,308.14 26.50,310.76 27.00,308.28 27.50,310.06 28.00,307.35 28.50,308.28 29.00,307.16 29.50,308.08 30.00,305.40 30.50,307.35 31.00,305.32 31.50,307.67 32.00,305.20 32.50,307.00 33.00,305.25 33.50,305.62 34.00,304.49 34.50,306.23 35.00,303.58 35.50,305.06 36.00,302.79 36.50,304.80 37.00,302.79 37.50,304.90 38.00,301.56 38.50,303.40 39.00,301.27 39.50,303.39 40.00,300.22 40.50,303.25 41.00,300.76 41.50,303.18 42.00,300.55 42.50,301.65 43.00,298.88 43.50,300.66 44.00,298.85 44.50,299.94 45.00,298.01 45.50,300.32 46.00,295.52 46.50,295.75 47.00,290.00 47.50,288.79 48.00,282.57 48.50,281.59 49.00,275.89 49.50,275.28 50.00,268.43 50.50,268.26 51.00,262.81 51.50,261.64 52.00,257.10 52.50,257.28 53.00,251.40 53.50,252.64 54.00,247.93 54.50,247.32 55.00,242.90 55.50,242.52 56.00,239.31 56.50,239.00 57.00,236.32 57.50,235.36 58.00,231.86 58.50,232.34 59.00,229.80 59.50,229.96 60.00,225.96 60.50,226.81 61.00,224.25 61.50,225.31 62.00,221.24 62.50,223.67 63.00,219.25 63.50,220.77 64.00,218.24 64.50,219.19 65.00,215.75 65.50,218.71 66.00,215.60 66.50,215.91 67.00,214.14 67.50,214.77 68.00,212.51 68.50,214.31 69.00,211.87 69.50,212.28 70.00,210.67 70.50,212.07 71.00,209.60 71.50,212.37 72.00,208.67 72.50,210.93 73.00,208.20 73.50,210.66 74.00,208.69 74.50,210.58 75.00,206.95 75.50,210.14 76.00,206.56 76.50,208.94 77.00,206.98 77.50,208.16 78.00,206.33 78.50,207.89 79.00,207.18 79.50,208.01 80.00,206.89 80.50,208.16 81.00,207.02 81.50,207.50 82.00,206.83 82.50,207.69 83.00,206.47 83.50,207.59 84.00,205.61 84.50,208.73 85.00,207.01 85.50,208.20 86.00,206.79 86.50,208.55 87.00,207.36 87.50,209.60 88.00,205.98 88.50,209.11 89.00,207.11 89.50,208.66 90.00,208.04 90.50,209.37 91.00,208.01 91.50,210.52 92.00,208.48 92.50,209.37 93.00,207.37 93.50,210.59 94.00,209.14 94.50,210.94 95.00,209.69 95.50,211.26 96.00,208.33 96.50,212.22 97.00,209.20 97.50,211.51 98.00,210.17 98.50,211.73 99.00,209.83 99.50,212.78 100.00,210.22 100.50,212.82 101.00,211.63 101.50,214.10 102.00,210.68 102.50,214.60 103.00,211.43 103.50,214.97 104.00,211.99 104.50,214.35 105.00,212.83 105.50,215.03 106.00,214.16 106.50,214.89 107.00,214.17 107.50,215.77 108.00,213.89 108.50,217.49 109.00,214.79 109.50,217.92 110.00,214.29 110.50,218.43 111.00,215.89 111.50,217.58 112.00,216.62 112.50,218.02 113.00,217.14 113.50,219.28 114.00,216.38 114.50,220.16 115.00,217.63 115.50,220.31 116.00,217.55 116.50,219.79 117.00,218.29 117.50,221.77 118.00,218.57 118.50,221.98 119.00,219.62 119.50,221.45 120.00,219.56 120.50,222.24 121.00,220.05 121.50,223.89 122.00,221.29 122.50,223.38 123.00,220.80 123.50,224.47 124.00,222.71 124.50,223.90 125.00,223.26 125.50,225.82 126.00,222.59 126.50,224.96 127.00,223.07 127.50,226.98 128.00,223.89 128.50,226.36 129.00,224.60 129.50,226.48 130.00,226.08 130.50,228.51 131.00,225.46 131.50,228.23 132.00,225.47 132.50,228.59 133.00,226.10 133.50,229.81 134.00,227.96 134.50,230.92 135.00,232.16 135.50,236.65 136.00,238.15 136.50,243.56 137.00,245.44 137.50,250.28 138.00,251.38 138.50,257.32 139.00,258.61 139.50,263.92 140.00,263.76 140.50,269.33 141.00,269.20 141.50,274.72 142.00,274.91 142.50,279.56 143.00,280.43 143.50,283.80 144.00,284.32 144.50,287.02 145.00,287.04 145.50,290.98 146.00,291.12 146.50,295.31 147.00,294.15 147.50,297.62 148.00,297.11 148.50,300.79 149.00,299.26 149.50,302.48 150.00,302.04 150.50,305.00 151.00,304.71 151.50,307.99 152.00,306.24 152.50,309.46 153.00,307.54 153.50,311.76 154.00,309.69 154.50,312.71 155.00,310.99 155.50,313.87 156.00,311.92 156.50,314.96 157.00,313.33 157.50,316.06 158.00,313.59 158.50,317.40 159.00,314.59 159.50,318.66 160.00,316.46 160.50,318.69 161.00,315.90 161.50,319.81 162.00,317.93 162.50,319.05 163.00,317.87 163.50,319.41 164.00,318.65 164.50,319.79 165.00,318.21 165.50,321.37 166.00,318.07 166.50,320.48 167.00,318.61 167.50,321.57 168.00,319.79 168.50,322.10 169.00,318.41 169.50,320.98 170.00,318.49 170.50,321.33 171.00,319.33 171.50,322.38 172.00,318.67 172.50,320.83 173.00,319.32 173.50,321.38 174.00,319.38 174.50,320.68 175.00,319.28 175.50,321.47 176.00,319.64 176.50,320.98 177.00,318.69 177.50,319.80 178.00,318.66 178.50,320.66 179.00,318.09 179.50,319.39 180.00,316.97 180.50,320.42 181.00,316.70 181.50,318.89 182.00,317.67 182.50,318.46 183.00,316.42 183.50,318.54 184.00,317.25 184.50,318.46 185.00,315.49 185.50,318.82 186.00,316.29 186.50,317.24 187.00,314.72 187.50,317.61 188.00,314.73 188.50,316.35 189.00,315.48 189.50,317.02 190.00,314.41 190.50,315.49 191.00,313.06 191.50,316.08 192.00,312.88 192.50,314.66 193.00,312.35 193.50,314.19 194.00,311.89 194.50,314.44 195.00,312.38 195.50,314.16 196.00,310.87 196.50,313.19 197.00,311.85 197.50,313.19 198.00,311.18 198.50,311.97 199.00,310.85 199.50,311.40 200.00,310.30 200.50,311.39 201.00,309.64 201.50,311.71 202.00,309.18 202.50,310.76 203.00,308.90 203.50,310.00 204.00,308.70 204.50,309.34 205.00,308.21 205.50,309.71 206.00,306.75 206.50,308.24 207.00,306.39 207.50,309.08 208.00,306.56 208.50,308.37 209.00,305.47 209.50,307.29 210.00,304.24 210.50,306.60 211.00,304.33 211.50,306.62 212.00,302.96 212.50,305.49 213.00,302.72 213.50,305.64 214.00,302.57 214.50,304.59 215.00,302.58 215.50,303.44 216.00,302.46 216.50,302.96 217.00,300.84 217.50,302.78 218.00,301.37 218.50,301.96 219.00,299.63 219.50,302.86 220.00,299.42 220.50,301.28 221.00,299.68 221.50,300.78 222.00,298.77 222.50,300.02 223.00,298.29 223.50,298.55 224.00,293.50 224.50,294.36 225.00,287.88 225.50,286.23 226.00,280.15 226.50,279.38 227.00,274.39 227.50,272.14 228.00,267.87 228.50,266.75 229.00,261.65 229.50,260.49 230.00,256.12 230.50,254.85 231.00,251.48 231.50,250.15 232.00,246.60 232.50,245.63 233.00,243.04 233.50,242.05 234.00,238.79 234.50,238.86 235.00,234.73 235.50,235.79 236.00,231.28 236.50,232.66 237.00,227.96 237.50,229.29 238.00,226.30 238.50,227.83 239.00,224.21 239.50,225.07 240.00,221.15 240.50,221.77 241.00,218.83 241.50,221.43 242.00,217.43 242.50,219.46 243.00,215.50 243.50,216.88 244.00,214.59 244.50,216.18 245.00,212.75 245.50,215.51 246.00,211.63 246.50,214.04 247.00,210.50 247.50,213.27 248.00,209.97 248.50,211.63 249.00,210.38 249.50,210.72 250.00,209.11 250.50,210.04 251.00,207.67 251.50,210.32 252.00,207.55 252.50,209.98 253.00,207.03 253.50,209.36 254.00,207.91 254.50,209.60 255.00,206.29 255.50,208.83 256.00,206.46 256.50,208.92 257.00,207.15 257.50,208.93 258.00,206.71 258.50,207.66 259.00,206.63 259.50,208.81 260.00,206.73 260.50,208.84 261.00,205.38 261.50,208.45 262.00,206.52 262.50,208.52 263.00,206.08 263.50,209.16 264.00,206.34 264.50,209.09 265.00,207.48 265.50,208.38 266.00,207.36 266.50,209.67 267.00,207.50 267.50,209.59 268.00,208.27 268.50,208.93 269.00,208.08 269.50,210.31 270.00,207.60 270.50,210.62 271.00,208.63 271.50,210.65 272.00,208.65 272.50,210.89 273.00,209.61 273.50,212.01 274.00,209.82 274.50,212.52 275.00,208.86 275.50,211.17 276.00,210.10 276.50,213.00 277.00,209.58 277.50,212.73 278.00,211.24 278.50,212.71 279.00,210.44 279.50,213.13 280.00,211.52 280.50,213.43 281.00,212.05 281.50,215.33 282.00,213.19 282.50,215.53 283.00,212.96 283.50,216.10 284.00,213.06 284.50,215.37 285.00,213.17 285.50,216.29 286.00,215.20 286.50,215.89 287.00,214.83 287.50,217.16 288.00,215.65 288.50,217.08 289.00,216.05 289.50,217.88 290.00,215.64 290.50,217.79 291.00,216.28 291.50,219.79 292.00,217.91 292.50,220.44 293.00,217.33 293.50,220.88 294.00,218.59 294.50,220.43 295.00,218.90 295.50,222.05 296.00,219.05 296.50,221.41 297.00,219.84 297.50,221.75 298.00,221.02 298.50,221.95 299.00,220.12 299.50,222.79 300.00,220.44 300.50,223.23 301.00,222.16 301.50,224.21 302.00,222.80 302.50,224.47 303.00,221.94 303.50,225.91 304.00,222.71 304.50,225.96 305.00,223.04 305.50,227.04 306.00,224.21 306.50,227.16 307.00,225.63 307.50,227.70 308.00,225.43 308.50,228.25 309.00,225.60 309.50,227.93 310.00,227.19 310.50,229.60 311.00,227.57 311.50,229.24 312.00,228.44 312.50,232.23 313.00,232.87 313.50,239.64 314.00,240.47 314.50,246.03 315.00,247.39 315.50,252.75 316.00,253.95 316.50,258.58 317.00,260.68 317.50,264.72 318.00,265.16 318.50,270.82 319.00,271.75 319.50,276.69 320.00,275.26 320.50,280.56 321.00,281.29 321.50,284.39 322.00,285.48 322.50,288.57 323.00,289.22 323.50,291.96 324.00,292.33 324.50,295.81 325.00,294.30 325.50,299.10 326.00,297.98 326.50,301.18 327.00,300.34 327.50,303.55 328.00,303.00 328.50,305.20 329.00,305.21 329.50,308.83 330.00,307.38 330.50,309.79 331.00,308.18 331.50,312.06 332.00,310.46 332.50,312.45 333.00,311.78 333.50,313.98 334.00,312.65 334.50,316.14 335.00,313.02 335.50,317.02 336.00,315.48 336.50,316.41 337.00,315.09 337.50,318.76 338.00,316.26 338.50,318.90 339.00,317.75 339.50,319.15 340.00,316.64 340.50,320.44 341.00,317.24 341.50,321.13 342.00,318.72 342.50,319.93 343.00,319.21 343.50,320.97 344.00,318.52 344.50,321.95 345.00,318.64 345.50,321.58 346.00,318.70 346.50,321.35 347.00,319.17 347.50,320.66 348.00,318.80 348.50,321.03 349.00,318.55 349.50,321.75 350.00,319.61 350.50,320.75 351.00,319.62 351.50,321.57 352.00,318.70 352.50,320.49 353.00,319.68 353.50,321.07 354.00,318.58 354.50,320.63 355.00,319.02 355.50,320.80 356.00,319.18 356.50,320.02 357.00,318.11 357.50,320.94 358.00,317.51 358.50,320.52 359.00,317.52 359.50,319.05 360.00,317.62 360.50,320.03 361.00,316.47 361.50,318.52 362.00,317.35 362.50,318.51 363.00,315.82 363.50,318.01 364.00,316.20 364.50,318.08 365.00,314.62 365.50,316.89 366.00,315.83 366.50,316.69 367.00,314.73 367.50,316.91 368.00,314.71 368.50,316.69 369.00,313.32 369.50,315.74 370.00,313.85 370.50,316.14 371.00,313.22 371.50,315.43 372.00,312.92 372.50,313.91 373.00,311.51 373.50,313.58 374.00,310.71 374.50,313.49 375.00,311.63 375.50,312.53 376.00,310.74 376.50,312.86 377.00,309.32 377.50,311.45 378.00,309.84 378.50,311.09 379.00,308.31 379.50,310.48 380.00,309.49 380.50,309.85 381.00,308.39 381.50,310.87 382.00,307.02 382.50,310.08 383.00,306.32 383.50,309.94 384.00,307.03 384.50,308.10 385.00,305.44 385.50,308.62 386.00,306.56 386.50,307.97 387.00,305.44 387.50,306.94 388.00,305.02 388.50,306.07 389.00,305.11 389.50,305.76 390.00,303.97 390.50,306.47 391.00,303.87 391.50,305.98 392.00,303.21 392.50,304.37 393.00,301.59 393.50,304.70 394.00,301.78 394.50,302.79 395.00,301.20 395.50,302.86 396.00,299.88 396.50,302.02 397.00,300.36 397.50,302.77 398.00,300.45 398.50,301.38 399.00,298.52 399.50,301.51 400.00,299.39 400.50,299.67 401.00,298.43 401.50,298.61 402.00,293.31 402.50,292.31 403.00,285.52 403.50,284.65 404.00,279.66 404.50,278.84 405.00,272.26 405.50,271.00 406.00,265.72 406.50,264.98 407.00,260.63 407.50,258.77 408.00,254.36 408.50,255.23 409.00,249.62 409.50,250.54 410.00,246.18 410.50,244.92 411.00,241.22 411.50,242.27 412.00,236.58 412.50,237.63 413.00,234.40 413.50,234.42 414.00,230.82 414.50,232.32 415.00,228.53 415.50,229.37 416.00,224.94 416.50,226.94 417.00,222.53 417.50,224.32 418.00,221.20 418.50,221.78 419.00,219.22 419.50,220.79 420.00,218.00 420.50,218.10 421.00,215.23 421.50,216.72 422.00,215.08 422.50,215.02 423.00,212.96 423.50,214.37 424.00,211.08 424.50,214.34 425.00,210.09 425.50,212.30 426.00,210.86 426.50,211.19 427.00,209.36 427.50,211.60 428.00,208.80 428.50,210.13 429.00,208.29 429.50,210.31 430.00,207.35 430.50,210.10 431.00,206.64 431.50,209.59 432.00,207.62 432.50,209.61 433.00,207.05 433.50,208.89 434.00,206.71 434.50,209.03 435.00,206.88 435.50,208.03 436.00,206.70 436.50,207.79 437.00,205.51 437.50,208.54 438.00,206.52 438.50,208.23 439.00,205.36 439.50,208.50 440.00,206.81 440.50,209.14 441.00,206.17 441.50,209.60 442.00,207.31 442.50,208.83 443.00,206.19 443.50,209.68 444.00,206.23 444.50,208.46 445.00,207.57 445.50,208.84 446.00,208.01 446.50,210.64 447.00,207.58 447.50,210.85 448.00,208.25 448.50,211.04 449.00,208.43 449.50,210.27 450.00,208.17 450.50,211.84 451.00,209.72 451.50,211.56 452.00,209.15 452.50,211.25 453.00,209.98 453.50,211.49 454.00,210.66 454.50,212.08 455.00,210.34 455.50,213.20 456.00,211.46 456.50,212.46 457.00,211.66 457.50,214.08 458.00,212.34 458.50,213.85 459.00,212.73 459.50,215.15 460.00,212.55 460.50,214.28 461.00,213.81 461.50,215.33 462.00,213.45 462.50,216.22 463.00,214.74 463.50,215.83 464.00,214.11 464.50,216.74 465.00,215.32 465.50,217.02 466.00,214.59 466.50,217.51 467.00,215.77 467.50,218.07 468.00,216.52 468.50,219.47 469.00,215.96 469.50,219.05 470.00,217.89 470.50,220.20 471.00,218.37 471.50,219.40 472.00,217.61 472.50,220.64 473.00,218.25 473.50,221.11 474.00,218.64 474.50,221.71 475.00,220.44 475.50,221.41 476.00,220.25 476.50,223.04 477.00,220.11 477.50,222.56 478.00,221.13 478.50,223.57 479.00,221.85 479.50,223.68 480.00,222.76 480.50,224.87 481.00,222.12 481.50,224.64 482.00,223.42 482.50,226.41 483.00,223.08 483.50,225.83 484.00,225.10 484.50,227.69 485.00,224.09 485.50,227.38 486.00,226.27 486.50,228.69 487.00,226.19 487.50,229.17 488.00,226.29 488.50,229.55 489.00,227.64 489.50,230.15 490.00,229.66 490.50,233.81 491.00,234.29 491.50,241.09 492.00,242.36 492.50,246.99 493.00,248.93 493.50,254.35 494.00,255.59 494.50,260.06 495.00,262.03 495.50,267.09 496.00,266.56 496.50,271.33 497.00,272.40 497.50,277.63 498.00,278.15 498.50,282.37 499.00,282.39 499.50,286.13 500.00,285.62 500.50,290.01 501.00,289.72 501.50,293.13 502.00,292.55 502.50,296.32 503.00,295.45 503.50,299.25 504.00,298.60 504.50,301.11 505.00,300.77 505.50,304.33 506.00,303.73 506.50,306.98 507.00,304.80 507.50,308.38 508.00,307.73 508.50,310.16 509.00,309.52 509.50,311.12 510.00,310.44 510.50,312.46 511.00,311.75 511.50,314.48 512.00,313.67 512.50,315.83 513.00,314.65 513.50,317.00 514.00,314.34 514.50,317.48 515.00,316.46 515.50,318.24 516.00,316.60 516.50,319.71 517.00,317.65 517.50,320.12 518.00,316.64 518.50,320.38 519.00,317.42 519.50,319.83 520.00,317.49 520.50,320.70 521.00,317.84 521.50,321.74 522.00,319.50 522.50,321.72 523.00,318.31 523.50,320.57 524.00,319.47 524.50,321.91 525.00,319.90 525.50,322.21 526.00,319.71 526.50,322.08 527.00,319.94 527.50,321.48 528.00,318.48 528.50,320.87 529.00,319.58 529.50,321.30 530.00,319.35 530.50,320.32 531.00,319.44 531.50,320.37 532.00,317.90 532.50,321.10 533.00,317.76 533.50,319.96 534.00,317.72 534.50,319.62 535.00,317.92 535.50,320.29 536.00,317.95 536.50,320.42 537.00,317.30 537.50,319.59 538.00,316.40 538.50,318.41 539.00,315.86 539.50,319.01 540.00,316.59 540.50,318.96 541.00,316.47 541.50,318.94 542.00,315.53 542.50,317.43 543.00,314.81 543.50,317.18 544.00,315.47 544.50,317.32 545.00,315.29 545.50,317.05 546.00,314.51 546.50,316.30 547.00,312.77 547.50,315.78 548.00,312.91 548.50,314.85 549.00,313.66 549.50,313.91 550.00,312.95 550.50,314.50 551.00,311.99 551.50,313.86 552.00,310.70 552.50,312.72 553.00,311.44 553.50,313.19 554.00,311.34 554.50,311.55 555.00,310.27 555.50,311.26 556.00,309.78 556.50,310.99 557.00,308.90 557.50,311.17 558.00,309.10 558.50,310.74 559.00,308.12 559.50,309.37 560.00,306.80 560.50,309.08 561.00,307.72 561.50,308.32 562.00,306.35 562.50,309.21 563.00,305.59 563.50,307.87 564.00,306.02 564.50,306.67 565.00,304.83 565.50,307.15 566.00,304.86 566.50,306.80 567.00,304.19 567.50,306.82 568.00,303.16 568.50,305.07 569.00,302.34 569.50,304.19 570.00,302.50 570.50,304.33 571.00,302.52 571.50,303.19 572.00,301.03 572.50,302.60 573.00,300.93 573.50,303.76 574.00,301.15 574.50,301.91 575.00,299.79 575.50,301.94 576.00,299.22 576.50,301.98 577.00,299.54 577.50,300.55 578.00,298.80 578.50,299.58 579.00,296.07 579.50,297.04 580.00,290.92 580.50,289.28 581.00,283.87 581.50,283.63 582.00,277.58 582.50,276.76 583.00,270.92 583.50,269.36 584.00,265.30 584.50,263.37 585.00,259.66 585.50,258.03 586.00,253.09 586.50,253.61 587.00,248.06 587.50,249.00 588.00,244.67 588.50,244.48 589.00,240.32 589.50,241.03 590.00,236.46 590.50,236.56 591.00,232.88 591.50,234.61 592.00,230.58 592.50,231.53 593.00,228.16 593.50,227.76 594.00,225.23 594.50,226.22 595.00,221.66 595.50,224.05 596.00,220.70 596.50,222.32 597.00,218.83 597.50,219.39 598.00,216.11 598.50,218.50 599.00,214.98 599.50,217.13 600.00,213.11 600.50,215.50 601.00,212.15 601.50,214.77 602.00,211.05 602.50,213.29 603.00,210.34 603.50,212.64 604.00,210.26 604.50,211.22 605.00,208.96 605.50,210.30 606.00,207.81 606.50,209.83 607.00,208.87 607.50,209.27 608.00,206.78 608.50,209.28 609.00,207.82 609.50,208.36 610.00,207.69 610.50,209.28 611.00,206.38 611.50,209.08 612.00,206.01 612.50,207.78 613.00,206.15 613.50,208.22 614.00,205.66 614.50,208.98 615.00,205.49 615.50,207.62 616.00,205.55 616.50,209.18 617.00,205.46 617.50,207.80 618.00,206.88 618.50,207.91 619.00,207.32 619.50,209.38 620.00,206.07 620.50,209.16 621.00,206.23 621.50,209.36 622.00,207.41 622.50,208.62 623.00,207.99 623.50,210.05 624.00,208.05 624.50,209.53 625.00,207.94 625.50,209.29 626.00,208.54 626.50,210.07 627.00,208.03 627.50,210.55 628.00,209.07 628.50,211.96 629.00,209.09 629.50,212.11 630.00,209.25 630.50,211.00 631.00,209.99 631.50,212.12 632.00,209.73 632.50,212.35 633.00,210.25 633.50,213.09 634.00,211.54 634.50,214.09 635.00,212.19 635.50,214.44 636.00,212.47 636.50,213.39 637.00,212.85 637.50,215.20 638.00,211.89 638.50,214.28 639.00,213.22 639.50,215.61 640.00,213.12 640.50,215.52 641.00,214.13 641.50,216.27 642.00,213.98 642.50,216.59 643.00,214.25 643.50,217.10 644.00,216.04 644.50,218.33 645.00,216.01 645.50,217.75 646.00,216.25 646.50,218.18 647.00,216.46 647.50,219.78 648.00,216.95 648.50,220.14 649.00,218.22 649.50,220.23 650.00,218.65 650.50,221.61 651.00,219.70 651.50,222.10 652.00,220.31 652.50,221.38 653.00,220.39 653.50,223.13 654.00,220.46 654.50,222.70 655.00,220.28 655.50,222.95 656.00,221.55 656.50,223.99 657.00,221.53 657.50,224.90 658.00,222.24 658.50,224.69 659.00,223.33 659.50,224.85 660.00,222.91 660.50,226.28 661.00,223.61 661.50,225.91 662.00,224.67 662.50,227.51 663.00,224.94 663.50,226.86 664.00,225.67 664.50,228.75 665.00,226.59 665.50,228.02 666.00,226.99 666.50,229.46 667.00,226.47 667.50,229.73 668.00,231.01 668.50,235.05 669.00,236.90 669.50,242.28 670.00,244.16 670.50,248.92 671.00,251.00 671.50,256.82 672.00,256.56 672.50,261.55 673.00,262.21 673.50,267.38 674.00,268.84 674.50,274.32 675.00,273.23 675.50,278.78 676.00,278.57 676.50,282.30 677.00,282.49 677.50,286.24 678.00,287.19 678.50,290.48 679.00,291.07 679.50,293.91 680.00,292.96 680.50,297.55 681.00,296.45 681.50,300.26 682.00,299.20 682.50,301.94 683.00,301.39 683.50,304.74 684.00,303.35 684.50,307.75 685.00,305.91 685.50,309.04 686.00,307.14 686.50,310.48 687.00,309.70 687.50,312.55 688.00,309.98 688.50,314.02 689.00,311.60 689.50,315.39 690.00,312.80 690.50,316.10 691.00,314.23 691.50,316.48 692.00,314.82 692.50,316.94 693.00,315.99 693.50,318.92 694.00,316.16 694.50,319.29 695.00,317.59 695.50,319.47 696.00,317.73 696.50,320.30 697.00,318.25 697.50,320.78 698.00,317.66 698.50,320.22 699.00,318.45 699.50,321.55 700.00,319.15 700.50,321.22 701.00,318.26 701.50,320.55 702.00,319.15 702.50,320.86 703.00,318.79 703.50,322.30 704.00,319.27 704.50,320.78 705.00,319.15 705.50,321.53 706.00,318.83 706.50,321.40 707.00,318.87 707.50,321.85 708.00,318.95 708.50,320.95 709.00,318.02 709.50,320.41 710.00,318.30 710.50,320.53 711.00,317.94 711.50,319.82 712.00,317.30 712.50,319.98 713.00,318.71 713.50,319.56 714.00,317.81 714.50,318.80 715.00,317.47 715.50,319.22 716.00,316.65 716.50,318.77 717.00,317.09 717.50,318.20 718.00,315.88 718.50,319.13 719.00,315.90 719.50,317.46 720.00,315.03 720.50,317.39 721.00,315.70 721.50,316.52 722.00,314.29 722.50,317.34 723.00,314.14 723.50,316.31 724.00,313.85 724.50,315.45 725.00,312.70 725.50,315.25 726.00,312.85 726.50,315.65 727.00,312.09 727.50,314.58 728.00,312.58 728.50,314.27 729.00,312.43 729.50,314.33 730.00,311.56 730.50,313.89 731.00,311.25 731.50,312.57 732.00,310.80 732.50,312.19 733.00,310.45 733.50,310.95 734.00,309.01 734.50,310.97 735.00,309.39 735.50,310.53 736.00,308.48 736.50,310.27 737.00,307.71 737.50,310.19 738.00,307.71 738.50,310.19 739.00,306.33 739.50,308.12 740.00,305.88 740.50,309.15 741.00,305.46 741.50,307.27 742.00,304.87 742.50,307.66 743.00,305.84 743.50,306.04 744.00,303.65 744.50,306.69 745.00,304.41 745.50,305.19 746.00,304.09 746.50,304.92 747.00,302.44 747.50,304.61 748.00,303.05 748.50,305.10 749.00,301.39 749.50,303.26 750.00,300.70 750.50,303.54 751.00,300.38 751.50,303.14 752.00,299.67 752.50,302.84 753.00,299.25 753.50,301.26 754.00,299.00 754.50,301.34 755.00,298.39 755.50,300.66 756.00,297.62 756.50,299.95 757.00,296.07 757.50,294.59 758.00,290.31 758.50,288.43 759.00,283.53 759.50,281.39 760.00,276.45 760.50,274.65 761.00,269.23 761.50,268.38 762.00,262.46 762.50,261.54 763.00,256.85 763.50,256.96 764.00,252.17 764.50,252.36 765.00,246.93 765.50,247.30 766.00,243.35 766.50,244.21 767.00,240.01 767.50,239.84 768.00,235.39 768.50,235.30 769.00,232.15 769.50,233.34 770.00,228.57 770.50,229.85 771.00,225.76 771.50,227.58 772.00,224.19 772.50,225.93 773.00,222.77 773.50,223.48 774.00,219.68 774.50,220.88 775.00,217.43 775.50,219.20 776.00,216.49 776.50,217.94 777.00,214.49 777.50,215.98 778.00,213.77 778.50,215.11 779.00,212.39 779.50,214.74 780.00,211.82 780.50,213.76 781.00,210.70 781.50,212.32 782.00,210.13 782.50,211.57 783.00,208.16 783.50,211.18 784.00,207.89 784.50,210.04 785.00,208.22 785.50,209.50 786.00,207.30 786.50,209.71 787.00,206.58 787.50,208.31 788.00,206.40 788.50,209.57 789.00,206.49 789.50,207.87 790.00,206.76 790.50,207.65 791.00,206.84 791.50,209.20 792.00,206.02 792.50,208.69 793.00,205.68 793.50,209.14 794.00,206.02 794.50,208.66 795.00,206.06 795.50,208.88 796.00,206.21 796.50,208.97 797.00,207.03 797.50,209.09" fill="none" stroke="#20ecf0" stroke-width="1.4" stroke-linejoin="round"/>
<polyline points="16.50,415.81 17.00,413.01 17.50,414.76 18.00,413.64 18.50,414.23 19.00,412.16 19.50,415.39 20.00,411.96 20.50,413.99 21.00,411.23 21.50,414.32 22.00,411.27 22.50,412.94 23.00,411.31 23.50,412.80 24.00,410.85 24.50,412.38 25.00,409.83 25.50,412.85 26.00,410.45 26.50,411.75 27.00,410.04 27.50,410.50 28.00,408.21 28.50,410.88 29.00,407.57 29.50,410.20 30.00,408.75 30.50,409.65 31.00,407.26 31.50,410.19 32.00,406.11 32.50,408.91 33.00,406.68 33.50,407.78 34.00,405.81 34.50,407.53 35.00,406.25 35.50,406.72 36.00,406.06 36.50,407.47 37.00,405.39 37.50,407.52 38.00,404.99 38.50,406.89 39.00,404.46 39.50,404.90 40.00,402.94 40.50,404.84 41.00,402.46 41.50,404.29 42.00,403.23 42.50,404.88 43.00,401.57 43.50,404.57 44.00,401.09 44.50,402.72 45.00,400.81 45.50,403.31 46.00,399.60 46.50,400.67 47.00,395.84 47.50,395.83 48.00,389.60 48.50,388.39 49.00,384.96 49.50,383.56 50.00,377.55 50.50,376.64 51.00,372.67 51.50,372.16 52.00,367.46 52.50,367.10 53.00,361.77 53.50,360.74 54.00,357.25 54.50,357.13 55.00,352.78 55.50,353.15 56.00,349.33 56.50,349.57 57.00,345.31 57.50,345.83 58.00,341.52 58.50,342.27 59.00,338.96 59.50,340.08 60.00,335.24 60.50,337.49 61.00,333.45 61.50,334.26 62.00,332.14 62.50,333.38 63.00,328.98 63.50,331.21 64.00,327.85 64.50,329.11 65.00,325.07 65.50,327.98 66.00,324.30 66.50,325.67 67.00,323.32 67.50,325.50 68.00,322.27 68.50,324.06 69.00,320.85 69.50,323.48 70.00,319.59 70.50,321.54 71.00,320.25 71.50,320.78 72.00,318.82 72.50,320.73 73.00,317.52 73.50,320.73 74.00,318.42 74.50,320.17 75.00,316.61 75.50,319.85 76.00,316.70 76.50,318.47 77.00,315.92 77.50,319.18 78.00,316.00 78.50,319.19 79.00,316.44 79.50,317.56 80.00,315.96 80.50,318.76 81.00,316.53 81.50,318.63 82.00,315.20 82.50,317.70 83.00,315.80 83.50,318.54 84.00,316.12 84.50,317.77 85.00,316.59 85.50,318.86 86.00,315.75 86.50,318.47 87.00,317.16 87.50,319.26 88.00,316.11 88.50,318.42 89.00,316.66 89.50,319.83 90.00,316.33 90.50,319.38 91.00,317.31 91.50,319.76 92.00,318.09 92.50,319.32 93.00,318.39 93.50,320.52 94.00,318.36 94.50,320.58 95.00,318.59 95.50,320.81 96.00,319.37 96.50,320.29 97.00,318.18 97.50,321.22 98.00,320.13 98.50,322.04 99.00,319.27 99.50,321.55 100.00,319.97 100.50,322.26 101.00,320.49 101.50,322.05 102.00,321.75 102.50,324.19 103.00,320.64 103.50,323.67 104.00,321.58 104.50,323.67 105.00,321.60 105.50,324.37 106.00,321.71 106.50,325.40 107.00,322.35 107.50,326.17 108.00,323.79 108.50,324.92 109.00,324.30 109.50,325.60 110.00,324.94 110.50,325.80 111.00,324.52 111.50,327.71 112.00,325.13 112.50,328.28 113.00,324.76 113.50,327.13 114.00,325.76 114.50,328.17 115.00,327.07 115.50,329.63 116.00,327.26 116.50,329.37 117.00,327.02 117.50,330.52 118.00,327.42 118.50,329.96 119.00,328.27 119.50,329.99 120.00,327.79 120.50,331.94 121.00,329.59 121.50,330.68 122.00,329.98 122.50,331.71 123.00,329.28 123.50,333.16 124.00,329.85 124.50,332.07 125.00,330.40 125.50,333.73 126.00,331.12 126.50,334.69 127.00,332.64 127.50,333.64 128.00,331.85 128.50,335.53 129.00,332.45 129.50,334.84 130.00,333.07 130.50,336.13 131.00,334.41 131.50,335.82 132.00,334.60 132.50,335.92 133.00,334.67 133.50,336.38 134.00,335.99 134.50,338.59 135.00,338.78 135.50,342.88 136.00,343.87 136.50,348.79 137.00,350.93 137.50,356.06 138.00,356.59 138.50,362.02 139.00,361.28 139.50,367.67 140.00,368.16 140.50,372.28 141.00,373.46 141.50,378.18 142.00,376.96 142.50,382.28 143.00,382.12 143.50,386.03 144.00,385.54 144.50,390.18 145.00,389.62 145.50,393.14 146.00,393.75 146.50,396.23 147.00,395.95 147.50,400.06 148.00,399.77 148.50,403.30 149.00,402.09 149.50,404.89 150.00,404.58 150.50,406.81 151.00,405.42 151.50,408.89 152.00,408.49 152.50,410.94 153.00,409.90 153.50,413.26 154.00,411.76 154.50,414.82 155.00,413.20 155.50,415.93 156.00,413.29 156.50,415.82 157.00,414.69 157.50,416.95 158.00,416.02 158.50,417.67 159.00,416.64 159.50,419.85 160.00,416.22 160.50,420.40 161.00,418.45 161.50,419.82 162.00,417.54 162.50,419.89 163.00,418.30 163.50,420.73 164.00,418.21 164.50,420.57 165.00,418.83 165.50,421.42 166.00,420.27 166.50,421.02 167.00,419.21 167.50,422.12 168.00,420.50 168.50,422.06 169.00,419.27 169.50,421.73 170.00,419.92 170.50,421.60 171.00,420.62 171.50,422.72 172.00,419.63 172.50,421.63 173.00,420.69 173.50,421.34 174.00,419.63 174.50,421.95 175.00,420.09 175.50,421.28 176.00,419.32 176.50,422.00 177.00,418.77 177.50,421.58 178.00,419.65 178.50,420.42 179.00,418.47 179.50,420.80 180.00,418.23 180.50,419.90 181.00,417.81 181.50,420.13 182.00,417.46 182.50,420.79 183.00,417.79 183.50,418.95 184.00,416.73 184.50,419.46 185.00,416.47 185.50,418.75 186.00,417.37 186.50,419.43 187.00,416.69 187.50,417.87 188.00,416.33 188.50,418.28 189.00,416.62 189.50,417.78 190.00,415.45 190.50,417.39 191.00,415.65 191.50,417.36 192.00,414.01 192.50,417.24 193.00,414.51 193.50,416.57 194.00,414.00 194.50,416.23 195.00,414.17 195.50,416.04 196.00,412.15 196.50,414.95 197.00,412.53 197.50,414.60 198.00,412.06 198.50,413.26 199.00,410.86 199.50,413.20 200.00,411.85 200.50,412.55 201.00,411.30 201.50,413.40 202.00,411.26 202.50,411.67 203.00,409.62 203.50,411.41 204.00,410.41 204.50,411.70 205.00,408.96 205.50,411.12 206.00,408.29 206.50,409.92 207.00,407.54 207.50,410.58 208.00,408.58 208.50,409.06 209.00,407.33 209.50,409.29 210.00,407.26 210.50,408.16 211.00,406.58 211.50,407.73 212.00,405.79 212.50,408.58 213.00,406.14 213.50,407.61 214.00,404.61 214.50,406.42 215.00,404.01 215.50,407.35 216.00,404.34 216.50,405.97 217.00,403.07 217.50,405.70 218.00,403.41 218.50,405.99 219.00,402.27 219.50,404.44 220.00,402.77 220.50,403.98 221.00,401.96 221.50,404.68 222.00,400.84 222.50,404.10 223.00,400.45 223.50,403.05 224.00,399.48 224.50,398.82 225.00,393.30 225.50,394.39 226.00,388.99 226.50,387.64 227.00,382.35 227.50,381.55 228.00,376.59 228.50,375.18 229.00,371.05 229.50,370.40 230.00,366.40 230.50,364.54 231.00,359.68 231.50,360.86 232.00,355.11 232.50,356.16 233.00,351.08 233.50,352.54 234.00,347.06 234.50,347.30 235.00,343.95 235.50,344.33 236.00,340.66 236.50,341.27 237.00,337.98 237.50,339.66 238.00,335.18 238.50,335.92 239.00,332.96 239.50,333.97 240.00,330.02 240.50,331.65 241.00,329.23 241.50,330.44 242.00,327.81 242.50,328.69 243.00,324.73 243.50,327.05 244.00,324.56 244.50,325.64 245.00,322.83 245.50,323.89 246.00,322.46 246.50,322.81 247.00,321.17 247.50,322.38 248.00,320.31 248.50,321.28 249.00,319.92 249.50,321.12 250.00,317.91 250.50,320.63 251.00,317.83 251.50,320.18 252.00,318.02 252.50,319.85 253.00,317.15 253.50,319.19 254.00,316.55 254.50,318.76 255.00,316.83 255.50,318.11 256.00,316.79 256.50,318.43 257.00,316.35 257.50,318.43 258.00,316.92 258.50,317.94 259.00,315.33 259.50,317.71 260.00,315.88 260.50,318.17 261.00,316.40 261.50,319.12 262.00,316.44 262.50,318.81 263.00,316.79 263.50,317.66 264.00,315.64 264.50,318.47 265.00,317.25 265.50,318.55 266.00,316.76 266.50,319.37 267.00,317.56 267.50,318.67 268.00,316.26 268.50,319.84 269.00,317.96 269.50,319.37 270.00,317.87 270.50,320.26 271.00,317.68 271.50,320.86 272.00,317.61 272.50,320.57 273.00,318.07 273.50,321.30 274.00,318.36 274.50,321.15 275.00,318.65 275.50,321.91 276.00,318.77 276.50,321.22 277.00,319.21 277.50,321.36 278.00,319.76 278.50,322.78 279.00,320.62 279.50,323.84 280.00,320.88 280.50,323.25 281.00,320.89 281.50,324.47 282.00,321.60 282.50,323.98 283.00,322.29 283.50,324.53 284.00,322.21 284.50,324.65 285.00,323.22 285.50,325.54 286.00,323.66 286.50,325.54 287.00,323.36 287.50,326.92 288.00,324.30 288.50,326.62 289.00,325.30 289.50,326.80 290.00,325.81 290.50,327.72 291.00,325.46 291.50,327.29 292.00,325.29 292.50,328.15 293.00,325.87 293.50,329.52 294.00,326.11 294.50,328.83 295.00,327.52 295.50,330.55 296.00,328.72 296.50,329.45 297.00,328.17 297.50,330.71 298.00,327.99 298.50,331.66 299.00,329.13 299.50,332.53 300.00,329.63 300.50,332.12 301.00,329.78 301.50,332.35 302.00,330.83 302.50,333.18 303.00,331.30 303.50,334.27 304.00,331.18 304.50,333.97 305.00,332.68 305.50,334.17 306.00,332.60 306.50,334.97 307.00,332.75 307.50,336.00 308.00,332.52 308.50,335.76 309.00,333.93 309.50,336.48 310.00,333.39 310.50,336.44 311.00,334.70 311.50,337.80 312.00,336.79 312.50,339.89 313.00,339.43 313.50,345.67 314.00,345.66 314.50,350.11 315.00,350.88 315.50,357.13 316.00,356.99 316.50,363.58 317.00,362.66 317.50,368.21 318.00,369.47 318.50,373.29 319.00,373.96 319.50,378.61 320.00,379.29 320.50,382.58 321.00,382.85 321.50,387.52 322.00,387.35 322.50,392.04 323.00,390.48 323.50,393.80 324.00,394.20 324.50,398.31 325.00,397.41 325.50,401.00 326.00,400.69 326.50,402.91 327.00,401.65 327.50,405.77 328.00,404.20 328.50,407.19 329.00,406.52 329.50,409.74 330.00,408.75 330.50,411.63 331.00,409.90 331.50,413.80 332.00,411.28 332.50,414.12 333.00,413.40 333.50,414.89 334.00,413.40 334.50,415.89 335.00,415.61 335.50,416.97 336.00,415.76 336.50,418.99 337.00,416.38 337.50,419.70 338.00,418.06 338.50,418.91 339.00,417.38 339.50,420.01 340.00,417.99 340.50,420.54 341.00,419.40 341.50,420.77 342.00,419.88 342.50,422.24 343.00,419.30 343.50,421.49 344.00,419.76 344.50,421.76 345.00,420.64 345.50,422.81 346.00,419.81 346.50,423.03 347.00,420.14 347.50,422.46 348.00,420.51 348.50,421.43 349.00,419.27 349.50,422.86 350.00,420.32 350.50,422.87 351.00,419.34 351.50,421.70 352.00,419.61 352.50,422.75 353.00,419.65 353.50,422.57 354.00,419.94 354.50,421.38 355.00,418.89 355.50,420.87 356.00,419.41 356.50,421.82 357.00,418.85 357.50,421.43 358.00,419.03 358.50,420.05 359.00,418.55 359.50,419.79 360.00,417.16 360.50,419.68 361.00,417.59 361.50,419.05 362.00,417.32 362.50,419.22 363.00,417.23 363.50,418.30 364.00,417.39 364.50,419.33 365.00,416.63 365.50,417.93 366.00,416.56 366.50,417.63 367.00,416.11 367.50,416.81 368.00,414.96 368.50,416.98 369.00,415.49 369.50,417.25 370.00,415.22 370.50,416.07 371.00,413.48 371.50,415.42 372.00,413.79 372.50,416.29 373.00,412.73 373.50,414.66 374.00,413.13 374.50,415.26 375.00,412.67 375.50,415.26 376.00,412.55 376.50,414.82 377.00,411.59 377.50,413.09 378.00,411.26 378.50,412.49 379.00,410.37 379.50,412.29 380.00,409.59 380.50,412.44 381.00,410.11 381.50,411.39 382.00,409.23 382.50,410.89 383.00,408.32 383.50,410.29 384.00,408.52 384.50,410.60 385.00,408.51 385.50,410.56 386.00,407.86 386.50,409.91 387.00,407.08 387.50,408.84 388.00,406.95 388.50,407.98 389.00,406.88 389.50,408.90 390.00,406.17 390.50,408.11 391.00,406.10 391.50,407.48 392.00,405.19 392.50,406.91 393.00,404.85 393.50,405.67 394.00,404.36 394.50,405.50 395.00,404.24 395.50,405.93 396.00,403.50 396.50,404.90 397.00,401.91 397.50,405.11 398.00,401.50 398.50,404.81 399.00,402.39 399.50,403.30 400.00,402.12 400.50,403.56 401.00,400.43 401.50,401.46 402.00,397.85 402.50,397.89 403.00,392.44 403.50,391.74 404.00,386.44 404.50,386.02 405.00,380.86 405.50,379.74 406.00,375.89 406.50,375.28 407.00,369.13 407.50,369.44 408.00,365.08 408.50,363.12 409.00,359.94 409.50,358.67 410.00,355.15 410.50,354.65 411.00,351.46 411.50,350.55 412.00,346.59 412.50,346.69 413.00,342.76 413.50,344.08 414.00,339.83 414.50,340.52 415.00,337.48 415.50,338.57 416.00,335.05 416.50,334.88 417.00,331.83 417.50,334.05 418.00,330.71 418.50,330.72 419.00,327.78 419.50,329.94 420.00,327.53 420.50,327.67 421.00,325.88 421.50,327.21 422.00,324.34 422.50,326.14 423.00,322.15 423.50,323.50 424.00,321.17 424.50,323.04 425.00,320.12 425.50,322.93 426.00,320.13 426.50,320.82 427.00,318.20 427.50,320.74 428.00,317.60 428.50,320.64 429.00,317.40 429.50,320.39 430.00,317.14 430.50,319.29 431.00,317.79 431.50,319.38 432.00,316.81 432.50,318.77 433.00,315.66 433.50,317.86 434.00,315.77 434.50,317.55 435.00,315.74 435.50,318.81 436.00,316.45 436.50,318.28 437.00,315.14 437.50,318.42 438.00,315.90 438.50,317.75 439.00,316.82 439.50,318.00 440.00,316.26 440.50,317.81 441.00,316.55 441.50,317.82 442.00,315.97 442.50,318.93 443.00,316.98 443.50,318.33 444.00,316.67 444.50,318.90 445.00,316.13 445.50,318.96 446.00,317.51 446.50,320.16 447.00,318.04 447.50,319.85 448.00,317.97 448.50,320.58 449.00,317.87 449.50,320.78 450.00,318.86 450.50,320.92 451.00,318.40 451.50,320.87 452.00,318.43 452.50,321.87 453.00,319.94 453.50,321.25 454.00,319.85 454.50,321.45 455.00,320.76 455.50,321.96 456.00,320.88 456.50,323.09 457.00,320.81 457.50,322.41 458.00,321.42 458.50,323.44 459.00,321.74 459.50,323.30 460.00,322.67 460.50,323.42 461.00,321.42 461.50,325.16 462.00,323.46 462.50,325.51 463.00,322.27 463.50,325.66 464.00,324.26 464.50,325.95 465.00,324.10 465.50,325.84 466.00,324.33 466.50,325.94 467.00,324.09 467.50,327.52 468.00,325.05 468.50,328.48 469.00,325.44 469.50,327.69 470.00,326.62 470.50,327.93 471.00,327.45 471.50,329.52 472.00,326.44 472.50,329.11 473.00,328.07 473.50,330.17 474.00,327.33 474.50,331.15 475.00,329.00 475.50,331.34 476.00,328.26 476.50,331.72 477.00,329.63 477.50,331.17 478.00,329.19 478.50,331.88 479.00,330.47 479.50,332.75 480.00,330.93 480.50,333.72 481.00,331.62 481.50,332.76 482.00,331.49 482.50,334.27 483.00,331.50 483.50,334.88 484.00,331.81 484.50,335.77 485.00,333.01 485.50,335.44 486.00,334.09 486.50,335.54 487.00,333.79 487.50,335.61 488.00,334.06 488.50,336.23 489.00,334.88 489.50,338.57 490.00,337.78 490.50,340.48 491.00,341.66 491.50,345.91 492.00,346.73 492.50,351.40 493.00,352.48 493.50,358.92 494.00,358.52 494.50,364.00 495.00,365.16 495.50,370.01 496.00,370.15 496.50,374.80 497.00,375.50 497.50,379.67 498.00,379.55 498.50,384.82 499.00,383.39 499.50,387.71 500.00,388.39 500.50,391.94 501.00,391.47 501.50,395.17 502.00,395.37 502.50,397.79 503.00,398.09 503.50,401.26 504.00,399.59 504.50,404.61 505.00,402.19 505.50,407.02 506.00,404.19 506.50,408.45 507.00,406.43 507.50,409.30 508.00,408.44 508.50,411.96 509.00,410.70 509.50,413.39 510.00,410.94 510.50,414.57 511.00,412.75 511.50,415.43 512.00,414.42 512.50,417.54 513.00,415.98 513.50,417.22 514.00,415.68 514.50,418.51 515.00,417.52 515.50,419.60 516.00,417.66 516.50,420.07 517.00,418.15 517.50,420.51 518.00,418.37 518.50,420.72 519.00,419.59 519.50,420.70 520.00,418.53 520.50,421.67 521.00,420.21 521.50,422.47 522.00,420.16 522.50,421.28 523.00,419.82 523.50,421.69 524.00,420.00 524.50,422.31 525.00,420.53 525.50,422.38 526.00,420.75 526.50,422.27 527.00,419.87 527.50,421.45 528.00,420.14 528.50,421.36 529.00,419.99 529.50,422.68 530.00,419.67 530.50,422.27 531.00,419.14 531.50,421.03 532.00,418.54 532.50,421.93 533.00,419.94 533.50,421.91 534.00,419.20 534.50,420.49 535.00,417.93 535.50,420.95 536.00,418.01 536.50,419.91 537.00,417.73 537.50,419.48 538.00,418.40 538.50,419.75 539.00,418.50 539.50,419.84 540.00,417.82 540.50,418.98 541.00,416.60 541.50,418.87 542.00,415.93 542.50,418.87 543.00,415.61 543.50,418.41 544.00,415.16 544.50,418.60 545.00,416.14 545.50,418.00 546.00,415.45 546.50,417.65 547.00,414.45 547.50,417.37 548.00,415.06 548.50,416.16 549.00,413.56 549.50,416.79 550.00,413.18 550.50,414.76 551.00,412.99 551.50,414.45 552.00,412.67 552.50,415.30 553.00,413.04 553.50,415.10 554.00,411.60 554.50,413.46 555.00,412.04 555.50,413.38 556.00,410.45 556.50,413.19 557.00,411.33 557.50,411.75 558.00,410.90 558.50,412.72 559.00,410.32 559.50,411.84 560.00,409.70 560.50,411.63 561.00,409.09 561.50,410.21 562.00,407.76 562.50,410.48 563.00,407.64 563.50,410.52 564.00,406.73 564.50,408.64 565.00,407.37 565.50,408.44 566.00,406.64 566.50,409.28 567.00,405.65 567.50,407.32 568.00,406.30 568.50,408.28 569.00,404.96 569.50,407.06 570.00,404.87 570.50,406.18 571.00,403.75 571.50,406.15 572.00,403.24 572.50,406.08 573.00,404.22 573.50,405.12 574.00,403.50 574.50,405.67 575.00,402.37 575.50,403.68 576.00,402.67 576.50,403.79 577.00,401.67 577.50,403.72 578.00,401.35 578.50,402.95 579.00,401.11 579.50,401.02 580.00,396.89 580.50,395.47 581.00,391.49 581.50,391.61 582.00,386.40 582.50,384.15 583.00,379.29 583.50,378.44 584.00,374.16 584.50,373.13 585.00,368.62 585.50,367.87 586.00,362.94 586.50,363.55 587.00,357.28 587.50,357.25 588.00,353.61 588.50,354.33 589.00,348.98 589.50,350.45 590.00,345.70 590.50,346.65 591.00,342.80 591.50,342.79 592.00,338.95 592.50,340.92 593.00,335.90 593.50,337.92 594.00,334.52 594.50,335.67 595.00,331.46 595.50,333.05 596.00,329.59 596.50,330.81 597.00,327.89 597.50,329.15 598.00,327.11 598.50,327.46 599.00,325.15 599.50,327.22 600.00,323.53 600.50,324.85 601.00,322.78 601.50,323.50 602.00,321.54 602.50,322.34 603.00,321.24 603.50,322.80 604.00,319.63 604.50,321.28 605.00,318.71 605.50,320.37 606.00,318.83 606.50,319.38 607.00,318.07 607.50,319.34 608.00,316.86 608.50,319.37 609.00,316.12 609.50,318.66 610.00,315.85 610.50,318.84 611.00,317.13 611.50,317.91 612.00,316.06 612.50,319.21 613.00,316.34 613.50,318.73 614.00,316.14 614.50,318.85 615.00,316.75 615.50,318.15 616.00,315.27 616.50,317.81 617.00,316.47 617.50,317.42 618.00,316.73 618.50,317.96 619.00,315.87 619.50,318.00 620.00,316.56 620.50,318.12 621.00,316.37 621.50,319.50 622.00,316.48 622.50,318.51 623.00,316.55 623.50,320.12 624.00,317.03 624.50,318.78 625.00,316.91 625.50,320.48 626.00,318.03 626.50,319.43 627.00,318.59 627.50,320.45 628.00,317.66 628.50,320.95 629.00,317.90 629.50,320.51 630.00,319.31 630.50,321.81 631.00,319.07 631.50,321.54 632.00,319.37 632.50,321.78 633.00,320.85 633.50,322.29 634.00,321.25 634.50,323.05 635.00,321.11 635.50,323.20 636.00,321.02 636.50,323.16 637.00,321.66 637.50,323.12 638.00,321.23 638.50,324.52 639.00,321.53 639.50,324.01 640.00,322.61 640.50,325.63 641.00,323.54 641.50,324.92 642.00,324.28 642.50,325.43 643.00,323.61 643.50,325.76 644.00,323.95 644.50,326.80 645.00,324.88 645.50,327.53 646.00,325.29 646.50,328.09 647.00,325.64 647.50,327.94 648.00,325.84 648.50,328.26 649.00,326.34 649.50,329.61 650.00,326.67 650.50,329.24 651.00,327.12 651.50,330.90 652.00,328.15 652.50,330.09 653.00,328.48 653.50,331.74 654.00,329.63 654.50,330.52 655.00,329.47 655.50,332.14 656.00,329.39 656.50,332.07 657.00,329.46 657.50,332.29 658.00,330.34 658.50,332.50 659.00,332.12 659.50,333.04 660.00,332.52 660.50,334.16 661.00,332.09 661.50,334.05 662.00,331.86 662.50,334.85 663.00,333.75 663.50,334.97 664.00,333.16 664.50,336.78 665.00,334.66 665.50,335.64 666.00,334.02 666.50,336.49 667.00,334.17 667.50,338.40 668.00,337.77 668.50,342.21 669.00,342.34 669.50,347.81 670.00,348.92 670.50,354.52 671.00,355.30 671.50,360.19 672.00,361.28 672.50,365.83 673.00,366.33 673.50,371.71 674.00,372.26 674.50,376.30 675.00,376.57 675.50,381.68 676.00,380.15 676.50,385.52 677.00,385.63 677.50,388.84 678.00,389.37 678.50,392.81 679.00,392.91 679.50,395.71 680.00,395.12 680.50,399.52 681.00,398.82 681.50,402.88 682.00,401.57 682.50,404.59 683.00,404.03 683.50,407.36 684.00,404.87 684.50,408.30 685.00,407.00 685.50,411.11 686.00,409.56 686.50,411.86 687.00,410.73 687.50,414.32 688.00,412.69 688.50,415.24 689.00,413.14 689.50,415.99 690.00,414.26 690.50,417.78 691.00,415.88 691.50,418.69 692.00,416.46 692.50,419.29 693.00,416.29 693.50,418.90 694.00,416.93 694.50,420.96 695.00,418.50 695.50,419.72 696.00,419.30 696.50,421.86 697.00,419.87 697.50,422.10 698.00,419.94 698.50,422.07 699.00,420.29 699.50,421.28 700.00,419.43 700.50,421.30 701.00,420.20 701.50,422.91 702.00,419.61 702.50,422.92 703.00,419.18 703.50,421.41 704.00,420.53 704.50,422.77 705.00,419.68 705.50,421.36 706.00,419.94 706.50,421.62 707.00,419.98 707.50,421.28 708.00,420.59 708.50,422.73 709.00,419.89 709.50,422.36 710.00,420.06 710.50,421.46 711.00,419.83 711.50,421.13 712.00,419.52 712.50,421.36 713.00,419.33 713.50,421.20 714.00,418.43 714.50,419.80 715.00,418.42 715.50,420.20 716.00,417.10 716.50,419.63 717.00,418.06 717.50,420.43 718.00,416.53 718.50,419.67 719.00,417.30 719.50,418.33 720.00,416.96 720.50,417.79 721.00,417.01 721.50,418.22 722.00,415.99 722.50,417.94 723.00,415.70 723.50,416.58 724.00,414.73 724.50,417.35 725.00,414.60 725.50,416.77 726.00,413.94 726.50,417.15 727.00,413.21 727.50,416.28 728.00,413.66 728.50,415.15 729.00,413.22 729.50,415.91 730.00,412.86 730.50,414.44 731.00,412.40 731.50,413.58 732.00,410.92 732.50,412.91 733.00,411.19 733.50,414.14 734.00,411.40 734.50,413.14 735.00,410.74 735.50,412.04 736.00,410.63 736.50,411.38 737.00,409.03 737.50,412.14 738.00,408.47 738.50,410.38 739.00,408.42 739.50,410.43 740.00,408.06 740.50,410.39 741.00,408.21 741.50,410.70 742.00,408.32 742.50,409.84 743.00,406.34 743.50,408.97 744.00,406.36 744.50,409.39 745.00,406.55 745.50,408.28 746.00,405.18 746.50,407.37 747.00,404.78 747.50,406.95 748.00,404.66 748.50,406.88 749.00,403.93 749.50,405.90 750.00,403.56 750.50,405.84 751.00,403.84 751.50,405.51 752.00,403.30 752.50,405.58 753.00,402.47 753.50,404.79 754.00,401.92 754.50,403.89 755.00,402.00 755.50,402.82 756.00,400.27 756.50,402.98 757.00,399.49 757.50,399.94 758.00,394.84 758.50,394.53 759.00,390.58 759.50,389.85 760.00,384.16 760.50,383.54 761.00,377.53 761.50,378.10 762.00,371.67 762.50,370.93 763.00,367.07 763.50,367.05 764.00,361.17 764.50,360.85 765.00,357.64 765.50,356.55 766.00,353.38 766.50,352.58 767.00,348.15 767.50,349.07 768.00,345.15 768.50,344.83 769.00,341.95 769.50,343.32 770.00,338.41 770.50,339.47 771.00,336.08 771.50,337.51 772.00,333.11 772.50,334.00 773.00,331.03 773.50,332.28 774.00,329.31 774.50,330.15 775.00,327.78 775.50,328.63 776.00,326.14 776.50,326.52 777.00,325.02 777.50,326.14 778.00,323.99 778.50,324.22 779.00,321.65 779.50,323.32 780.00,321.35 780.50,322.31 781.00,319.54 781.50,321.20 782.00,319.11 782.50,321.85 783.00,319.21 783.50,320.44 784.00,317.57 784.50,320.25 785.00,317.83 785.50,318.75 786.00,317.28 786.50,318.95 787.00,316.45 787.50,318.51 788.00,316.71 788.50,318.90 789.00,315.77 789.50,318.18 790.00,316.37 790.50,318.45 791.00,315.29 791.50,317.67 792.00,315.15 792.50,318.56 793.00,316.21 793.50,318.48 794.00,316.30 794.50,317.45 795.00,315.59 795.50,318.08 796.00,316.10 796.50,318.40 797.00,315.55 797.50,319.01" fill="none" stroke="#e024e0" stroke-width="1.4" stroke-linejoin="round"/>
<path d="M0 258.5H9.5L15 264.7L9.5 271H0Z" fill="#1ee0e6"/>
<path d="M0 271H9.5L15 264.7" fill="none" stroke="#10306a" stroke-width="0.8"/>
<text x="2.6" y="269.2" font-family="Liberation Sans" font-weight="bold" font-size="11" fill="#000" stroke="#000" stroke-width="0.5">2</text>
<path d="M0.5 363.5H9.5L15 370L9.5 376.3H0.5Z" fill="#000" stroke="#d020d0" stroke-width="1.1"/>
<text x="2.6" y="374.2" font-family="Liberation Sans" font-weight="bold" font-size="11" fill="#d020d0" stroke="#d020d0" stroke-width="0.4">3</text>
<path d="M788.8 267.4L794.2 263.3V271.7Z" fill="#1ee0e6"/><path d="M794 267.4H797.5" stroke="#20ecf0" stroke-width="1.4"/>
<path d="M401.2 18.5H411V27.2L406.1 30.6L401.2 27.2Z" fill="#f5a000"/>
<path d="M403 20.2H409.2V22H407V28H405.2V22H403Z" fill="#000"/>
<path d="M403.8 3.2H410.4V12H403.8Z" fill="#f5a000"/>
<path d="M405 0.5H410L407.1 3.2Z" fill="#f5a000"/>
<path d="M405.7 4.5H408.5V5.6H407.7V10.6H406.5V5.6H405.7Z" fill="#000"/>
<path d="M402.3 12.6H411L406.6 17.6Z" fill="#f5a000"/>
<path d="M221.2 1.4Q219.9 1.9 219.9 6.2Q219.9 10.5 221.2 11" fill="none" stroke="#e6cccc" stroke-width="1.1"/>
<path d="M594.6 1.4Q595.9 1.9 595.9 6.2Q595.9 10.5 594.6 11" fill="none" stroke="#e6cccc" stroke-width="1.1"/>
<path d="M725 535.4H727.6Q729 535.4 729.8 531.5Q730.6 527.8 732 527.8H734.4" fill="none" stroke="#fff" stroke-width="1.4"/>
<g transform="translate(0.0,0)" fill="none" stroke="#18b4b8" stroke-width="1.1"><path d="M221.5 527.2V533H223.4Q225 533 225 531.5Q225 530 223.4 530H221.5M221.5 527.2H223.1Q224.5 527.2 224.5 528.6Q224.5 530 223.1 530"/><path d="M224.4 530.6L225.6 535.5L226.6 532.3L227.6 535.5L228.8 530.6"/></g>
<g transform="translate(108.4,0)" fill="none" stroke="#9a1aa0" stroke-width="1.1"><path d="M221.5 527.2V533H223.4Q225 533 225 531.5Q225 530 223.4 530H221.5M221.5 527.2H223.1Q224.5 527.2 224.5 528.6Q224.5 530 223.1 530"/><path d="M224.4 530.6L225.6 535.5L226.6 532.3L227.6 535.5L228.8 530.6"/></g>
</svg>

<div class="pill" style="left:129px;top:526px;width:19px;background:#22e0e8">2</div>
<div class="t cy" style="left:161.5px;top:525.5px">2.00 V</div>
<div class="pill" style="left:237px;top:526px;width:20px;background:#b418b8">3</div>
<div class="t mg" style="left:270.5px;top:525.5px">2.00 V</div>

<div class="t" style="left:122.5px;top:542.6px">Value</div>
<div class="t" style="left:191.5px;top:542.6px">Mean</div>
<div class="t" style="left:256.7px;top:542.6px;letter-spacing:1.8px">Min</div>
<div class="t" style="left:320.5px;top:542.6px">Max</div>
<div class="t" style="left:384px;top:542.6px">Std Dev</div>
<div class="pill" style="left:20px;top:557.5px;width:20px;background:#22e0e8">2</div>
<div class="t cy" style="left:43.6px;top:557.2px">Frequency</div>
<div class="t cy" style="left:122.6px;top:557.4px;letter-spacing:1.15px">440.3 Hz</div>
<div class="t cy" style="left:191.9px;top:557.4px;letter-spacing:1.35px">439.6</div>
<div class="t cy" style="left:255.9px;top:557.4px;letter-spacing:1.2px">438.4</div>
<div class="t cy" style="left:320.2px;top:557.4px;letter-spacing:1.35px">440.3</div>
<div class="t cy" style="left:384.6px;top:557.4px;letter-spacing:1.3px">562.8m</div>

<div class="t" style="left:461.5px;top:525.8px">1.00ms</div>
<div class="a" style="left:460.2px;top:540.8px;width:9.3px;height:9px;background:#f5a000;border-radius:2px"></div>
<div class="a" style="left:461.6px;top:542.4px;width:6.5px;height:1.8px;background:#000"></div><div class="a" style="left:463.9px;top:542.4px;width:2px;height:6.3px;background:#000"></div>
<div class="t or" style="left:473.5px;top:539.6px;letter-spacing:0.85px">49.90 %</div>
<div class="t" style="left:584.2px;top:525.8px">1.00MS/s</div>
<div class="t" style="left:584.2px;top:539.2px;letter-spacing:1.28px">10k points</div>
<div class="pill" style="left:694.4px;top:526px;width:19.5px;background:#22e0e8">2</div>
<div class="a" style="left:735.4px;top:531px;width:7.6px;height:1.4px;background:#fff"></div>
<div class="t" style="left:743.8px;top:525.8px">80.0mV</div>
<div class="t" style="left:715px;top:572.6px">27 Dec 2021</div>
<div class="t" style="left:715px;top:586.1px">03:26:04</div>
</body></html>
